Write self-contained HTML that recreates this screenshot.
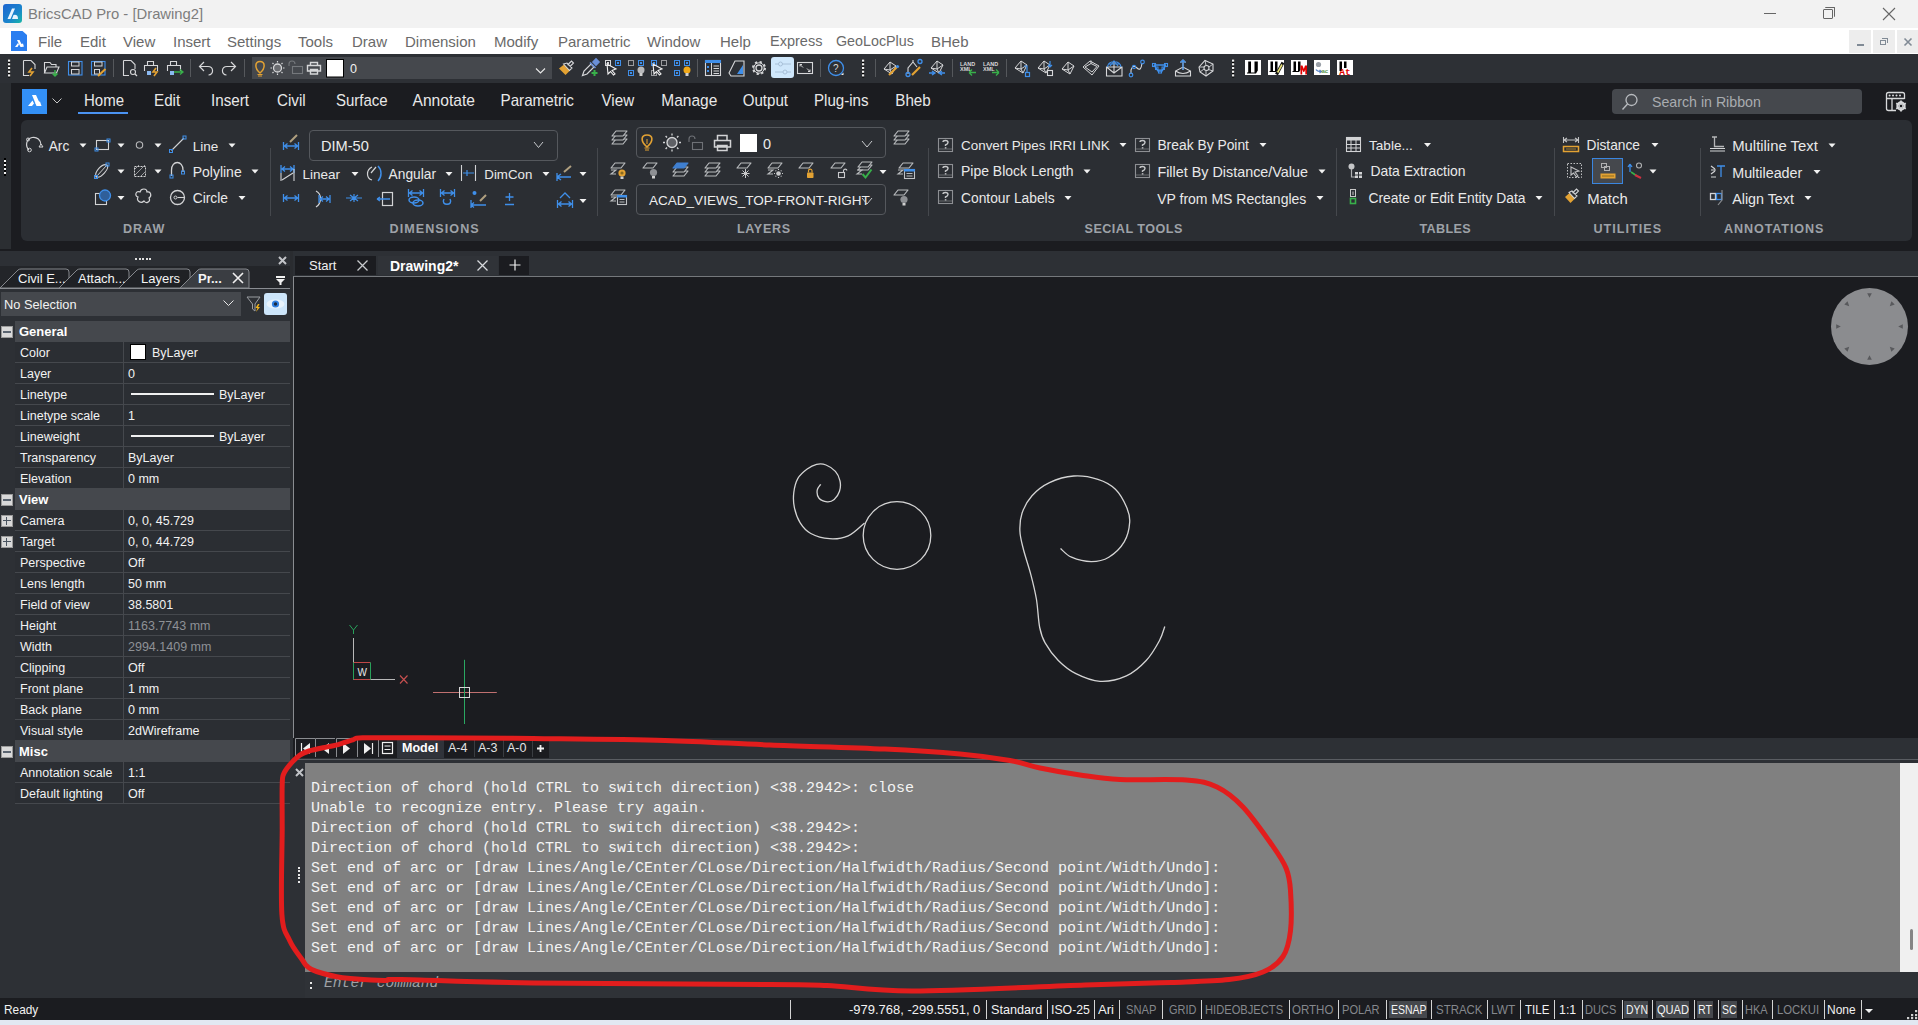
<!DOCTYPE html>
<html><head><meta charset="utf-8">
<style>
*{margin:0;padding:0;box-sizing:border-box}
html,body{width:1918px;height:1025px;overflow:hidden;background:#1b1c20;font-family:"Liberation Sans",sans-serif}
.a{position:absolute}
.t{position:absolute;white-space:nowrap;line-height:1}
svg{position:absolute;overflow:visible}
.mi{font-size:15px;color:#6a6a6a;top:34px}
.rt{font-size:15px;color:#e6e6e6;top:93px}
.rl{position:absolute;white-space:nowrap;line-height:1;font-size:14.5px;color:#e4e4e4}
.pt{font-size:12.5px;font-weight:bold;color:#9da1a7;letter-spacing:1.6px;top:221px}
.pk{position:absolute;white-space:nowrap;line-height:1;font-size:12.5px;color:#f2f2f2}
.cl{position:absolute;left:311px;font-family:"Liberation Mono",monospace;font-size:14.67px;color:#f4f4f4;white-space:pre;line-height:20px}
.sb{position:absolute;white-space:nowrap;line-height:1;top:1003px;font-size:13px;color:#f0f0f0}
.sg{color:#8c8f94}
.ss{position:absolute;top:1000px;width:1px;height:17px;background:#c8c8c8}
.hl{position:absolute;top:999px;height:19px;background:#45484d}

</style></head><body>
<!-- TITLE BAR -->
<div class="a" style="left:0;top:0;width:1918px;height:28px;background:#f2f2f2"></div>
<div class="a" style="left:3px;top:4px;width:19px;height:19px;border-radius:3px;background:linear-gradient(135deg,#1c64d0,#1a85cc 60%,#19b8a6)"></div>
<svg style="left:3px;top:4px" width="19" height="19"><path d="M9 4.5L12 4.5L7.5 15L4.5 15Z M10.5 11Q15 10 15 15L9 15Z" fill="#e8f4ff"/></svg>
<div class="t" style="left:28px;top:7.3px;font-size:14.8px;color:#7d7d7d">BricsCAD Pro - [Drawing2]</div>
<div class="a" style="left:1764px;top:13px;width:12px;height:1px;background:#666"></div>
<div class="a" style="left:1823px;top:9px;width:10px;height:10px;border:1px solid #666;border-radius:1px"></div>
<div class="a" style="left:1825px;top:7px;width:10px;height:10px;border-top:1px solid #666;border-right:1px solid #666;border-radius:1px"></div>
<svg style="left:1882px;top:7px" width="14" height="14"><path d="M1 1L13 13M13 1L1 13" stroke="#666" stroke-width="1.1"/></svg>
<!-- MENU BAR -->
<div class="a" style="left:0;top:28px;width:1918px;height:26px;background:#fff"></div>
<div class="a" style="left:11px;top:31px;width:16px;height:20px;background:#2a7ef0;clip-path:polygon(0 0,72% 0,100% 20%,100% 100%,0 100%)"></div>
<svg style="left:11px;top:31px" width="16" height="20"><path d="M6 9L8.5 9L12 16L9.5 16Z M4 16L7 12L8 13.5L6.5 16Z M9 13.5L12 12.5L13 16Z" fill="#fff"/></svg>
<div class="t mi" style="left:38px">File</div>
<div class="t mi" style="left:80px">Edit</div>
<div class="t mi" style="left:123px">View</div>
<div class="t mi" style="left:173px">Insert</div>
<div class="t mi" style="left:227px">Settings</div>
<div class="t mi" style="left:298px">Tools</div>
<div class="t mi" style="left:352px">Draw</div>
<div class="t mi" style="left:405px">Dimension</div>
<div class="t mi" style="left:494px">Modify</div>
<div class="t mi" style="left:558px">Parametric</div>
<div class="t mi" style="left:647px">Window</div>
<div class="t mi" style="left:720px">Help</div>
<div class="t mi" style="left:770px;font-size:14.5px">Express</div>
<div class="t mi" style="left:836px;font-size:14.3px">GeoLocPlus</div>
<div class="t mi" style="left:931px">BHeb</div>
<div class="a" style="left:1849px;top:30px;width:22px;height:23px;background:#ededed"></div>
<div class="a" style="left:1873px;top:30px;width:22px;height:23px;background:#ededed"></div>
<div class="a" style="left:1897px;top:30px;width:21px;height:23px;background:#ededed"></div>
<div class="a" style="left:1857px;top:44px;width:7px;height:2px;background:#808a95"></div>
<div class="a" style="left:1880px;top:40px;width:6px;height:5px;border:1px solid #808a95"></div>
<div class="a" style="left:1882px;top:38px;width:6px;height:5px;border-top:1px solid #808a95;border-right:1px solid #808a95"></div>
<svg style="left:1904px;top:38px" width="8" height="8"><path d="M0.5 0.5L7.5 7.5M7.5 0.5L0.5 7.5" stroke="#808a95" stroke-width="1.6"/></svg>
<!-- QAT -->
<div class="a" style="left:0;top:54px;width:1918px;height:29px;background:#2d3035"></div>
<div class="a" style="left:252px;top:57px;width:300px;height:22px;background:#45484d"></div>
<div class="a" style="left:771px;top:57px;width:23px;height:21px;border-radius:3px;background:#cfe7fb"></div>
<svg style="left:0;top:0" width="1918" height="90">
<rect x="8" y="59" width="2.2" height="18.5" fill="#000"/>
<rect x="8" y="59.5" width="2.2" height="2.2" fill="#f0f0f0"/>
<rect x="8" y="63.2" width="2.2" height="2.2" fill="#f0f0f0"/>
<rect x="8" y="66.9" width="2.2" height="2.2" fill="#f0f0f0"/>
<rect x="8" y="70.6" width="2.2" height="2.2" fill="#f0f0f0"/>
<rect x="8" y="74.3" width="2.2" height="2.2" fill="#f0f0f0"/>
<rect x="862" y="59" width="2.2" height="18.5" fill="#000"/>
<rect x="862" y="59.5" width="2.2" height="2.2" fill="#f0f0f0"/>
<rect x="862" y="63.2" width="2.2" height="2.2" fill="#f0f0f0"/>
<rect x="862" y="66.9" width="2.2" height="2.2" fill="#f0f0f0"/>
<rect x="862" y="70.6" width="2.2" height="2.2" fill="#f0f0f0"/>
<rect x="862" y="74.3" width="2.2" height="2.2" fill="#f0f0f0"/>
<rect x="1232" y="59" width="2.2" height="18.5" fill="#000"/>
<rect x="1232" y="59.5" width="2.2" height="2.2" fill="#f0f0f0"/>
<rect x="1232" y="63.2" width="2.2" height="2.2" fill="#f0f0f0"/>
<rect x="1232" y="66.9" width="2.2" height="2.2" fill="#f0f0f0"/>
<rect x="1232" y="70.6" width="2.2" height="2.2" fill="#f0f0f0"/>
<rect x="1232" y="74.3" width="2.2" height="2.2" fill="#f0f0f0"/>
<path d="M113.5 59V77" stroke="#55585c" stroke-width="1"/>
<path d="M190.5 59V77" stroke="#55585c" stroke-width="1"/>
<path d="M244.5 59V77" stroke="#55585c" stroke-width="1"/>
<path d="M697.5 59V77" stroke="#55585c" stroke-width="1"/>
<path d="M820.5 59V77" stroke="#55585c" stroke-width="1"/>
<path d="M875.5 59V77" stroke="#55585c" stroke-width="1"/>
<path d="M952.5 59V77" stroke="#55585c" stroke-width="1"/>
<path d="M1006.5 59V77" stroke="#55585c" stroke-width="1"/>
<path d="M23.5 60.5H31L35 64.5V69M29 75.5H23.5V60.5" fill="none" stroke="#d6d7d9" stroke-width="1.1"/>
<path d="M32 68L29 72H33L30 76" fill="none" stroke="#e3a233" stroke-width="1.6"/>
<path d="M44.5 73V62.5H50L51.5 64.5H56V67M44.5 73L47 67H59L56.5 73Z" fill="none" stroke="#d6d7d9" stroke-width="1.1"/><path d="M55 70V76M52.5 73.5L55 76L57.5 73.5" fill="none" stroke="#38b04a" stroke-width="1.5"/>
<rect x="68.5" y="61.5" width="13.5" height="13.5" fill="none" stroke="#3f8fea" stroke-width="1.1"/><rect x="71.5" y="62" width="7.5" height="4" fill="none" stroke="#d6d7d9"/><rect x="71.5" y="69.5" width="7.5" height="4.5" fill="none" stroke="#d6d7d9"/>
<rect x="91.5" y="61.5" width="13.5" height="13.5" fill="none" stroke="#3f8fea" stroke-width="1.1"/><rect x="94.5" y="62" width="7.5" height="4" fill="none" stroke="#d6d7d9"/><rect x="94.5" y="69.5" width="5" height="4.5" fill="none" stroke="#d6d7d9"/><path d="M98 76L105.5 69" stroke="#e3a233" stroke-width="2"/>
<path d="M123.5 60.5H131L135 64.5V69M129 75.5H123.5V60.5" fill="none" stroke="#d6d7d9" stroke-width="1.1"/>
<circle cx="133" cy="72" r="2.5" fill="none" stroke="#d6d7d9" stroke-width="1.1"/><path d="M135 74L137 76" stroke="#d6d7d9" stroke-width="1.2"/>
<path d="M147.5 65V61.5H153.5V65M144.5 71V65.5H157.5V71" fill="none" stroke="#d6d7d9" stroke-width="1.1"/><rect x="147" y="71" width="4" height="4" fill="#8ab8f0"/>
<path d="M156 68L153 72H157L154 76" fill="none" stroke="#e3a233" stroke-width="1.6"/>
<path d="M170.5 65V61.5H176.5V65M167.5 71V65.5H180.5V71" fill="none" stroke="#d6d7d9" stroke-width="1.1"/><rect x="170" y="71" width="4" height="4" fill="#8ab8f0"/>
<path d="M174 72H183M180 69.5L183 72L180 74.5" fill="none" stroke="#38b04a" stroke-width="1.3"/>
<path d="M204 62L199.5 66.5L204 71M200 66.5H208C214 66.5 214 75 208.5 75" fill="none" stroke="#d6d7d9" stroke-width="1.2"/>
<path d="M231 62L235.5 66.5L231 71M235 66.5H227C221 66.5 221 75 226.5 75" fill="none" stroke="#d6d7d9" stroke-width="1.2"/>
<path d="M260 73C254 68 255 61.5 260 61.5C265 61.5 266 68 260 73Z" fill="none" stroke="#e3a233" stroke-width="1.5"/><path d="M257.5 74.5H262.5M258 76H262" stroke="#e3a233" stroke-width="1"/>
<circle cx="277.5" cy="68" r="4" fill="#6a6c70" stroke="#d6d7d9" stroke-width="1.3"/><path d="M277.5 61V62.5M277.5 73.5V75M270.5 68H272M283 68H284.5M272.5 63L273.5 64M281.5 72L282.5 73M272.5 73L273.5 72M281.5 64L282.5 63" stroke="#d6d7d9" stroke-width="1.2"/>
<rect x="292.5" y="66.5" width="10" height="7" fill="none" stroke="#75787c" stroke-width="1.1"/><path d="M289 66V64A3 3 0 0 1 295 64" fill="none" stroke="#75787c" stroke-width="1.1"/>
<path d="M310.5 65V62.5H317.5V65M307.5 65.5H320.5V71H307.5ZM310.5 69.5H317.5V74H310.5Z" fill="none" stroke="#d6d7d9" stroke-width="1.4"/>
<rect x="326.5" y="59.5" width="17" height="17.5" fill="#fff" stroke="#000" stroke-width="1"/>
<path d="M536 68.5L540.5 73L545 68.5" fill="none" stroke="#e8e8e8" stroke-width="1.1"/>
<path d="M559 68.5L564 64.5L570 70.5L565.5 75Z" fill="#e3a233"/><path d="M563.5 64L569.5 70.5L572 68L567 63Z M567.5 65L571.5 61L573.5 63L570 66.5" fill="none" stroke="#d6d7d9" stroke-width="1.1"/>
<path d="M582.5 75.5L584 71L591 64L594 67L587 74Z" fill="none" stroke="#d6d7d9" stroke-width="1.2"/><path d="M590 62.5L595.5 68M593 62L596 59L599 62L596 65Z" fill="#6a8fd8" stroke="#6a8fd8" stroke-width="1.6"/><path d="M594.5 70V76M591.5 73H597.5" stroke="#38b04a" stroke-width="2"/>
<rect x="605.5" y="60.5" width="5" height="5" fill="none" stroke="#d6d7d9" stroke-width="1"/><rect x="607" y="62" width="2" height="2" fill="#d6d7d9"/>
<rect x="615.5" y="60.5" width="5" height="5" fill="none" stroke="#3f8fea" stroke-width="1"/><rect x="617" y="62" width="2" height="2" fill="#3f8fea"/>
<path d="M607 64L616 69L612 70.5L615 74L613.5 75L610.5 71.5L608 74Z" fill="#2d3035" stroke="#f0f0f0" stroke-width="1.1"/>
<rect x="628.5" y="60.5" width="5" height="5" fill="none" stroke="#9a9b9e"/>
<rect x="638.5" y="60.5" width="5" height="5" fill="none" stroke="#3f8fea" stroke-width="1"/><rect x="640" y="62" width="2" height="2" fill="#3f8fea"/>
<rect x="628.5" y="70.5" width="5" height="5" fill="none" stroke="#3f8fea" stroke-width="1"/><rect x="630" y="72" width="2" height="2" fill="#3f8fea"/>
<circle cx="641" cy="70" r="3.5" fill="#b8b9bb"/><rect x="639.5" y="73" width="3" height="3" fill="#d0d0d0"/>
<rect x="651.5" y="60.5" width="5" height="5" fill="none" stroke="#3f8fea" stroke-width="1"/><rect x="653" y="62" width="2" height="2" fill="#3f8fea"/>
<rect x="661.5" y="60.5" width="5" height="5" fill="none" stroke="#9a9b9e"/><rect x="651.5" y="70.5" width="5" height="5" fill="none" stroke="#9a9b9e"/>
<path d="M653 64L662 69L658 70.5L661 74L659.5 75L656.5 71.5L654 74Z" fill="#2d3035" stroke="#f0f0f0" stroke-width="1.1"/>
<rect x="674.5" y="60.5" width="5" height="5" fill="none" stroke="#3f8fea" stroke-width="1"/><rect x="676" y="62" width="2" height="2" fill="#3f8fea"/>
<rect x="684.5" y="60.5" width="5" height="5" fill="none" stroke="#3f8fea" stroke-width="1"/><rect x="686" y="62" width="2" height="2" fill="#3f8fea"/>
<rect x="674.5" y="70.5" width="5" height="5" fill="none" stroke="#3f8fea" stroke-width="1"/><rect x="676" y="72" width="2" height="2" fill="#3f8fea"/>
<circle cx="687" cy="70" r="3.5" fill="#f0a818"/><rect x="685.5" y="73" width="3" height="3" fill="#d0d0d0"/>
<rect x="705.5" y="60.5" width="15" height="15" fill="none" stroke="#d6d7d9" stroke-width="1.1"/><rect x="705" y="60" width="16" height="3" fill="#3f8fea"/><path d="M711.5 63V75.5" stroke="#d6d7d9"/><rect x="707" y="66" width="2" height="2" fill="#3f8fea"/><rect x="707" y="70" width="2" height="2" fill="#3f8fea"/><path d="M713.5 66H719M713.5 68.5H719M713.5 71H719M713.5 73.5H719" stroke="#d6d7d9"/>
<path d="M729 73L735 61H744V76H731Z" fill="none" stroke="#d6d7d9" stroke-width="1.1"/><path d="M737 74L743 65V74Z" fill="#3f8fea"/>
<circle cx="759" cy="68" r="3" fill="none" stroke="#d6d7d9" stroke-width="1.3"/><circle cx="759" cy="68" r="6" fill="none" stroke="#d6d7d9" stroke-width="2" stroke-dasharray="2.2 2.5"/><circle cx="759" cy="68" r="5.2" fill="none" stroke="#d6d7d9" stroke-width="1"/>
<path d="M775 64H791M775 72H791" stroke="#a8c0d8" stroke-width="1"/><circle cx="780.5" cy="64" r="2" fill="#cfe7fb" stroke="#a8c0d8"/><circle cx="785" cy="72" r="2" fill="#cfe7fb" stroke="#a8c0d8"/>
<rect x="797.5" y="62.5" width="15" height="11" fill="none" stroke="#d6d7d9" stroke-width="1.1"/><path d="M800 64.5L803 67.5M800 64.5H802M800 64.5V66.5M810 71.5L807 68.5M810 71.5H808M810 71.5V69.5" fill="none" stroke="#d6d7d9"/>
<circle cx="836" cy="68" r="7.5" fill="none" stroke="#3f8fea" stroke-width="1.3"/><text x="833" y="72" font-family="Liberation Sans" font-size="10" fill="#d6d7d9">?</text><path d="M841 75L843.5 72.5V75Z" fill="#f0f0f0"/>
<path d="M884 69L890 62L896 66L892 74Z M890 62L890 70L884 69M890 70L892 74M890 70L896 66" fill="none" stroke="#d6d7d9" stroke-width="1"/>
<path d="M889 75L897 67" stroke="#e3a233" stroke-width="2.2"/><circle cx="897.5" cy="66.5" r="1.6" fill="#3f8fea"/>
<path d="M908 74V68L913 62L917 67M913 62V60" fill="none" stroke="#d6d7d9" stroke-width="1.1"/><circle cx="908" cy="74.5" r="2" fill="none" stroke="#3f8fea" stroke-width="1.3"/><circle cx="920" cy="61.5" r="2" fill="none" stroke="#3f8fea" stroke-width="1.3"/><path d="M912 75L920 67" stroke="#e3a233" stroke-width="2.2"/>
<path d="M931 68L937 61L943 65L939 73Z M937 61L937 69L931 68M937 69L939 73M937 69L943 65" fill="none" stroke="#d6d7d9" stroke-width="1"/>
<path d="M929 73H935M932 71L935 73L932 75M945 73H939M942 71L939 73L942 75" fill="none" stroke="#3f8fea" stroke-width="1.3"/>
<text x="960" y="65.5" font-family="Liberation Sans" font-size="5.5" font-weight="bold" fill="#d8d8d8">LAND</text><text x="960" y="71" font-family="Liberation Sans" font-size="5.5" font-weight="bold" fill="#d8d8d8">XML</text>
<path d="M969 72.5H976M969 72.5L972 69.5M969 72.5L972 75.5" fill="none" stroke="#38b04a" stroke-width="1.3"/>
<text x="983" y="65.5" font-family="Liberation Sans" font-size="5.5" font-weight="bold" fill="#d8d8d8">LAND</text><text x="983" y="71" font-family="Liberation Sans" font-size="5.5" font-weight="bold" fill="#d8d8d8">XML</text>
<path d="M992 72.5H999M999 72.5L996 69.5M999 72.5L996 75.5" fill="none" stroke="#38b04a" stroke-width="1.3"/>
<path d="M1015 68L1021 61L1027 65L1023 73Z M1021 61L1021 69L1015 68M1021 69L1023 73M1021 69L1027 65" fill="none" stroke="#d6d7d9" stroke-width="1"/>
<path d="M1024 66H1027V72" fill="none" stroke="#3f8fea" stroke-width="1.2"/><rect x="1025.5" y="72.5" width="4" height="4" fill="none" stroke="#3f8fea" stroke-width="1.2"/>
<path d="M1038 68L1044 61L1050 65L1046 73Z M1044 61L1044 69L1038 68M1044 69L1046 73M1044 69L1050 65" fill="none" stroke="#d6d7d9" stroke-width="1"/>
<path d="M1050 61V67M1048 65L1050 67L1052 65" fill="none" stroke="#3f8fea" stroke-width="1.2"/><rect x="1047.5" y="70.5" width="5" height="5" fill="none" stroke="#d6d7d9" stroke-width="1.1"/>
<path d="M1062 69L1068 62L1074 66L1070 74Z M1068 62L1068 70L1062 69M1068 70L1070 74M1068 70L1074 66" fill="none" stroke="#d6d7d9" stroke-width="1"/>
<path d="M1083 67L1090 61L1099 66L1092 75Z M1085 67L1091 63.5L1097 66.5L1092 72Z M1091 63.5V60.5" fill="none" stroke="#d6d7d9" stroke-width="1"/>
<path d="M1106.5 76V67H1122V76ZM1106.5 67L1114 73L1122 67M1114 73V61" fill="none" stroke="#d6d7d9" stroke-width="1.1"/><path d="M1107.5 67C1108 60 1120 60 1121 67M1110 66L1114 61L1118 66M1108 64H1120" fill="none" stroke="#3f8fea" stroke-width="1.2"/>
<path d="M1131 74V70Q1133 64 1137 68Q1141 72 1142 63" fill="none" stroke="#d6d7d9" stroke-width="1.1"/><circle cx="1131" cy="75" r="1.8" fill="none" stroke="#3f8fea" stroke-width="1.2"/><circle cx="1142.5" cy="62" r="1.8" fill="none" stroke="#3f8fea" stroke-width="1.2"/><circle cx="1134" cy="67" r="1.6" fill="none" stroke="#3f8fea" stroke-width="1.1"/>
<path d="M1154 65L1158 71H1162L1166 65M1154 65H1166" fill="none" stroke="#3f8fea" stroke-width="1.4"/><rect x="1152.5" y="63.5" width="3" height="3" fill="none" stroke="#3f8fea" stroke-width="1.1"/><rect x="1164.5" y="63.5" width="3" height="3" fill="none" stroke="#3f8fea" stroke-width="1.1"/><rect x="1158.5" y="70" width="3" height="3" fill="none" stroke="#3f8fea" stroke-width="1.1"/><rect x="1155.5" y="67" width="2.5" height="2.5" fill="none" stroke="#3f8fea"/><rect x="1162" y="67" width="2.5" height="2.5" fill="none" stroke="#3f8fea"/>
<path d="M1175.5 76V71L1183 67L1190.5 71V76Z M1175.5 71Q1183 76 1190.5 71 M1183 70V60M1180.5 62.5L1183 60L1185.5 62.5" fill="none" stroke="#d6d7d9" stroke-width="1.1"/><path d="M1183 70V60M1180.5 62.5L1183 60L1185.5 62.5" fill="none" stroke="#3f8fea" stroke-width="1.2"/>
<path d="M1199 67L1205 60.5L1213 64L1213 71L1206 76L1200 72Z" fill="none" stroke="#d6d7d9" stroke-width="1.1"/><circle cx="1206.5" cy="68" r="2.5" fill="none" stroke="#d6d7d9" stroke-width="1.1"/><path d="M1205 60.5L1206 65.5M1213 64L1209 67M1213 71L1208.5 69.5M1206 76L1206 70.5M1200 72L1204 69M1199 67L1204 67" stroke="#d6d7d9" stroke-width="0.9"/>
<rect x="1245" y="60" width="16" height="15" fill="#fff"/>
<rect x="1268" y="60" width="16" height="15" fill="#fff"/>
<rect x="1291" y="60" width="16" height="15" fill="#fff"/>
<rect x="1314" y="60" width="16" height="15" fill="#fff"/>
<rect x="1337" y="60" width="16" height="15" fill="#fff"/>
<path d="M1248.2 61.5H1251V72.5H1248.2Z M1254.5 61.5H1257.8V70.5L1256 73.5H1247L1247 72.5H1254.5Z" fill="#000"/>
<path d="M1270.5 61.5H1273V71H1270.5Z M1275 61.5H1277.5V70L1276 72H1269.5V71H1275Z" fill="#000"/>
<path d="M1276.5 74.5L1283 62.5" stroke="#111" stroke-width="3.2"/><path d="M1277.6 72.5L1282 64.5" stroke="#e8e27a" stroke-width="1.6"/>
<path d="M1293.5 61.5H1296V71H1293.5Z M1298 61.5H1300.5V70L1299 72H1292.5V71H1298Z" fill="#000"/>
<path d="M1300.5 74.5V65.5H1302.5L1303.8 69L1305 65.5H1307V74.5H1305.3V69.5L1304.2 72H1303.4L1302.2 69.5V74.5Z" fill="#e00000"/>
<circle cx="1318.5" cy="64.5" r="2.6" fill="#9aa0a8"/><path d="M1316 69.5Q1317 71.5 1321 71.5M1319.5 70L1321.5 71.5L1319.5 73" fill="none" stroke="#5a86c8" stroke-width="1.2"/><text x="1321.5" y="73" font-family="Liberation Sans" font-size="6" font-weight="bold" fill="#5a9a50">ac</text>
<path d="M1339.5 61.5H1342V71H1339.5Z M1344 61.5H1346.5V68H1344Z" fill="#000"/>
<text x="1339.2" y="74.5" font-family="Liberation Mono" font-size="9.5" font-weight="bold" fill="#e00000">At</text>
</svg>
<div class="t" style="left:350px;top:63.1px;font-size:12.5px;color:#f0f0f0">0</div>
<!-- RIBBON -->
<div class="a" style="left:0;top:83px;width:1918px;height:168px;background:#1b1c20"></div>
<div class="a" style="left:0;top:83px;width:11px;height:166px;background:#2b2e32"></div>
<div class="a" style="left:4px;top:158px;width:2.3px;height:18px;background:#000"></div>
<div class="a" style="left:4px;top:159.6px;width:2.3px;height:2.4px;background:#f4f4f4"></div>
<div class="a" style="left:4px;top:163.6px;width:2.3px;height:2.4px;background:#f4f4f4"></div>
<div class="a" style="left:4px;top:167.6px;width:2.3px;height:2.4px;background:#f4f4f4"></div>
<div class="a" style="left:4px;top:171.6px;width:2.3px;height:2.4px;background:#f4f4f4"></div>
<div class="a" style="left:22px;top:89px;width:25px;height:25px;background:#3390f6"></div>
<svg style="left:22px;top:89px" width="25" height="25"><path d="M10 6L14 6L19 17L14.5 17Z M6 17L10.5 11.5L12 14.5L10 17Z M13 14L18 12.5L19.5 17L15 17Z" fill="#fff"/></svg>
<svg style="left:52px;top:98px" width="10" height="6"><path d="M0.5 0.5L5 5L9.5 0.5" stroke="#c8c8c8" fill="none"/></svg>
<div class="t" style="left:84px;top:93.0px;font-size:15.0px;color:#e8e8e8;transform:scaleY(1.1);transform-origin:0 12.70px">Home</div>
<div class="t" style="left:154px;top:93.0px;font-size:15.2px;color:#e8e8e8;transform:scaleY(1.1);transform-origin:0 12.87px">Edit</div>
<div class="t" style="left:211px;top:93.0px;font-size:15.2px;color:#e8e8e8;transform:scaleY(1.1);transform-origin:0 12.87px">Insert</div>
<div class="t" style="left:277px;top:93.0px;font-size:15.2px;color:#e8e8e8;transform:scaleY(1.1);transform-origin:0 12.87px">Civil</div>
<div class="t" style="left:336px;top:93.0px;font-size:15.0px;color:#e8e8e8;transform:scaleY(1.1);transform-origin:0 12.70px">Surface</div>
<div class="t" style="left:412.5px;top:92.9px;font-size:15.6px;color:#e8e8e8;transform:scaleY(1.1);transform-origin:0 13.21px">Annotate</div>
<div class="t" style="left:500.5px;top:93.0px;font-size:15.2px;color:#e8e8e8;transform:scaleY(1.1);transform-origin:0 12.87px">Parametric</div>
<div class="t" style="left:601.5px;top:93.0px;font-size:15.2px;color:#e8e8e8;transform:scaleY(1.1);transform-origin:0 12.87px">View</div>
<div class="t" style="left:661.3px;top:92.9px;font-size:15.5px;color:#e8e8e8;transform:scaleY(1.1);transform-origin:0 13.12px">Manage</div>
<div class="t" style="left:742.7px;top:93.0px;font-size:15.1px;color:#e8e8e8;transform:scaleY(1.1);transform-origin:0 12.78px">Output</div>
<div class="t" style="left:814px;top:93.0px;font-size:15.1px;color:#e8e8e8;transform:scaleY(1.1);transform-origin:0 12.78px">Plug-ins</div>
<div class="t" style="left:895.3px;top:93.0px;font-size:15.2px;color:#e8e8e8;transform:scaleY(1.1);transform-origin:0 12.87px">Bheb</div>
<div class="a" style="left:78px;top:112px;width:50px;height:2px;background:#4b93f2"></div>
<div class="a" style="left:1612px;top:89px;width:250px;height:25px;border-radius:4px;background:#45484d"></div>
<svg style="left:1621px;top:93px" width="18" height="18"><circle cx="10.5" cy="7" r="5.5" stroke="#b8bbbf" stroke-width="1.3" fill="none"/><path d="M6.5 11L1.5 16.5" stroke="#b8bbbf" stroke-width="1.4"/></svg>
<div class="t" style="left:1652px;top:95px;font-size:14.2px;color:#a9acb0">Search in Ribbon</div>
<svg style="left:1880px;top:88px" width="30" height="28"><path d="M16 22.5H8.5Q6.5 22.5 6.5 20.5V6.5Q6.5 4.5 8.5 4.5H22.5Q24.5 4.5 24.5 6.5V11M6.5 10.5H24.5M12 10.5V22.5" fill="none" stroke="#d8d9db" stroke-width="1.3"/><circle cx="9.6" cy="7.6" r="1" fill="#d8d9db"/><circle cx="13" cy="7.6" r="1" fill="#d8d9db"/><circle cx="16.5" cy="7.6" r="1" fill="#d8d9db"/><circle cx="20" cy="7.6" r="1" fill="#d8d9db"/><circle cx="21" cy="18" r="3.6" fill="none" stroke="#d8d9db" stroke-width="2.2"/><path d="M21 12.5V23.5M16.2 15.3L25.8 20.7M16.2 20.7L25.8 15.3" stroke="#d8d9db" stroke-width="1.8"/><circle cx="21" cy="18" r="1.3" fill="#1b1c20"/></svg>
<div class="a" style="left:21px;top:120px;width:1891px;height:121px;border-radius:6px;background:#2b2e33"></div>
<div class="t" style="left:123.0px;top:223px;font-size:12.6px;font-weight:bold;color:#9ea2a8;letter-spacing:1.0px">DRAW</div>
<div class="t" style="left:389.5px;top:223px;font-size:12.6px;font-weight:bold;color:#9ea2a8;letter-spacing:1.05px">DIMENSIONS</div>
<div class="t" style="left:737.0px;top:223px;font-size:12.6px;font-weight:bold;color:#9ea2a8;letter-spacing:0.62px">LAYERS</div>
<div class="t" style="left:1084.5px;top:223px;font-size:12.6px;font-weight:bold;color:#9ea2a8;letter-spacing:0.48px">SECIAL TOOLS</div>
<div class="t" style="left:1419.5px;top:223px;font-size:12.6px;font-weight:bold;color:#9ea2a8;letter-spacing:0.32px">TABLES</div>
<div class="t" style="left:1593.5px;top:223px;font-size:12.6px;font-weight:bold;color:#9ea2a8;letter-spacing:1.02px">UTILITIES</div>
<div class="t" style="left:1724.0px;top:223px;font-size:12.6px;font-weight:bold;color:#9ea2a8;letter-spacing:0.89px">ANNOTATIONS</div>
<div class="a" style="left:270.0px;top:148px;width:1px;height:68px;background:#45484d"></div>
<div class="a" style="left:597.0px;top:148px;width:1px;height:68px;background:#45484d"></div>
<div class="a" style="left:928.0px;top:148px;width:1px;height:68px;background:#45484d"></div>
<div class="a" style="left:1336.0px;top:148px;width:1px;height:68px;background:#45484d"></div>
<div class="a" style="left:1554.0px;top:148px;width:1px;height:68px;background:#45484d"></div>
<div class="a" style="left:1700.0px;top:148px;width:1px;height:68px;background:#45484d"></div>
<div class="t" style="left:48.7px;top:139.5px;font-size:13.73px;color:#e9e9e9">Arc</div>
<div class="t" style="left:192.7px;top:139.5px;font-size:13.5px;color:#e9e9e9">Line</div>
<div class="t" style="left:192.7px;top:165.1px;font-size:13.99px;color:#e9e9e9">Polyline</div>
<div class="t" style="left:192.7px;top:191.6px;font-size:13.8px;color:#e9e9e9">Circle</div>
<div class="t" style="left:302.5px;top:167.5px;font-size:13.5px;color:#e9e9e9">Linear</div>
<div class="t" style="left:388.6px;top:167.5px;font-size:13.75px;color:#e9e9e9">Angular</div>
<div class="t" style="left:484.3px;top:167.6px;font-size:13.3px;color:#e9e9e9">DimCon</div>
<div class="t" style="left:961px;top:138.8px;font-size:13.45px;color:#e9e9e9">Convert Pipes IRRI LINK</div>
<div class="t" style="left:961px;top:164.9px;font-size:13.97px;color:#e9e9e9">Pipe Block Length</div>
<div class="t" style="left:961px;top:191.6px;font-size:13.8px;color:#e9e9e9">Contour Labels</div>
<div class="t" style="left:1157.4px;top:138.8px;font-size:13.85px;color:#e9e9e9">Break By Point</div>
<div class="t" style="left:1157.4px;top:164.8px;font-size:14.36px;color:#e9e9e9">Fillet By Distance/Value</div>
<div class="t" style="left:1157.2px;top:191.6px;font-size:14.0px;color:#e9e9e9">VP from MS Rectangles</div>
<div class="t" style="left:1369px;top:138.8px;font-size:13.6px;color:#e9e9e9">Table...</div>
<div class="t" style="left:1370.4px;top:164.9px;font-size:13.93px;color:#e9e9e9">Data Extraction</div>
<div class="t" style="left:1368.5px;top:191.6px;font-size:13.85px;color:#e9e9e9">Create or Edit Entity Data</div>
<div class="t" style="left:1586.5px;top:138.8px;font-size:13.75px;color:#e9e9e9">Distance</div>
<div class="t" style="left:1587.2px;top:191.5px;font-size:14.9px;color:#e9e9e9">Match</div>
<div class="t" style="left:1732.2px;top:139.1px;font-size:14.86px;color:#e9e9e9">Multiline Text</div>
<div class="t" style="left:1732.2px;top:165.6px;font-size:14.35px;color:#e9e9e9">Multileader</div>
<div class="t" style="left:1732.2px;top:191.9px;font-size:14.3px;color:#e9e9e9">Align Text</div>
<div class="a" style="left:309px;top:130px;width:249px;height:31px;border:1px solid #55585d;border-radius:4px"></div>
<div class="t" style="left:321px;top:138.7px;font-size:14.6px;color:#ececec">DIM-50</div>
<div class="a" style="left:636px;top:127px;width:250px;height:31px;border:1px solid #55585d;border-radius:4px"></div>
<div class="a" style="left:636px;top:184px;width:250px;height:31px;border:1px solid #55585d;border-radius:4px"></div>
<div class="t" style="left:649px;top:194.4px;font-size:13.54px;color:#ececec">ACAD_VIEWS_TOP-FRONT-RIGHT</div>
<div class="a" style="left:740px;top:134px;width:17px;height:18px;background:#fff"></div>
<div class="t" style="left:763px;top:137.1px;font-size:14.5px;color:#ececec">0</div>
<div class="a" style="left:1592px;top:158px;width:31px;height:26px;background:#45484d;border:1px solid #3a86e0"></div>
<svg style="left:0;top:0" width="1918" height="260">
<path d="M79.5 143.5H86.5L83.0 147.5Z" fill="#f2f2f2"/>
<path d="M117.5 143.5H124.5L121.0 147.5Z" fill="#f2f2f2"/>
<path d="M154.5 143.5H161.5L158.0 147.5Z" fill="#f2f2f2"/>
<path d="M228.5 143.5H235.5L232.0 147.5Z" fill="#f2f2f2"/>
<path d="M117.5 169.5H124.5L121.0 173.5Z" fill="#f2f2f2"/>
<path d="M154.5 169.5H161.5L158.0 173.5Z" fill="#f2f2f2"/>
<path d="M251.5 169.5H258.5L255.0 173.5Z" fill="#f2f2f2"/>
<path d="M117.5 196H124.5L121.0 200Z" fill="#f2f2f2"/>
<path d="M238.5 196H245.5L242.0 200Z" fill="#f2f2f2"/>
<path d="M351.5 172H358.5L355.0 176Z" fill="#f2f2f2"/>
<path d="M445.5 172H452.5L449.0 176Z" fill="#f2f2f2"/>
<path d="M542.5 172H549.5L546.0 176Z" fill="#f2f2f2"/>
<path d="M579.5 172H586.5L583.0 176Z" fill="#f2f2f2"/>
<path d="M579.5 199H586.5L583.0 203Z" fill="#f2f2f2"/>
<path d="M879.5 170H886.5L883.0 174Z" fill="#f2f2f2"/>
<path d="M1119.5 143H1126.5L1123.0 147Z" fill="#f2f2f2"/>
<path d="M1083.5 169.5H1090.5L1087.0 173.5Z" fill="#f2f2f2"/>
<path d="M1064.5 196H1071.5L1068.0 200Z" fill="#f2f2f2"/>
<path d="M1259.5 143H1266.5L1263.0 147Z" fill="#f2f2f2"/>
<path d="M1318.5 169.5H1325.5L1322.0 173.5Z" fill="#f2f2f2"/>
<path d="M1316.5 196H1323.5L1320.0 200Z" fill="#f2f2f2"/>
<path d="M1424 143H1431L1427.5 147Z" fill="#f2f2f2"/>
<path d="M1535.5 196H1542.5L1539.0 200Z" fill="#f2f2f2"/>
<path d="M1651.5 143H1658.5L1655.0 147Z" fill="#f2f2f2"/>
<path d="M1649.5 169.5H1656.5L1653.0 173.5Z" fill="#f2f2f2"/>
<path d="M1828.5 143.5H1835.5L1832.0 147.5Z" fill="#f2f2f2"/>
<path d="M1813.5 170H1820.5L1817.0 174Z" fill="#f2f2f2"/>
<path d="M1804.5 196H1811.5L1808.0 200Z" fill="#f2f2f2"/>
<path d="M534 142L538.5 147.5L543 142" fill="none" stroke="#c8cacd" stroke-width="1"/>
<path d="M862 141L867.0 147L872 141" fill="none" stroke="#c8cacd" stroke-width="1"/>
<path d="M862 198L867.0 204L872 198" fill="none" stroke="#c8cacd" stroke-width="1"/>
<path d="M29 150C25 146 26 139 32 137.5C37 136.5 41 140 41 145" fill="none" stroke="#d2d3d5" stroke-width="1.2"/><circle cx="29.5" cy="150" r="1.8" fill="none" stroke="#d2d3d5"/><circle cx="28" cy="139.5" r="1.5" fill="none" stroke="#d2d3d5"/><path d="M39 147H43L41 144Z" fill="none" stroke="#d2d3d5"/>
<rect x="96.5" y="140.5" width="12" height="9" fill="none" stroke="#d2d3d5" stroke-width="1.1"/>
<rect x="107.0" y="139.0" width="3" height="3" fill="none" stroke="#3f8fea" stroke-width="1"/>
<rect x="95.0" y="148.0" width="3" height="3" fill="none" stroke="#3f8fea" stroke-width="1"/>
<circle cx="139.5" cy="145" r="3.2" fill="none" stroke="#b8b9bb" stroke-width="1.1"/>
<path d="M171.5 150.5L184 138" stroke="#d2d3d5" stroke-width="1.1"/>
<rect x="169.5" y="149.5" width="3" height="3" fill="none" stroke="#3f8fea" stroke-width="1"/>
<rect x="183.0" y="136.0" width="3" height="3" fill="none" stroke="#3f8fea" stroke-width="1"/>
<path d="M96 177C94 172 102 163 107 165C110 168 101 179 96 177Z" fill="none" stroke="#d2d3d5" stroke-width="1.1"/><path d="M96 177L107 165" stroke="#d2d3d5"/>
<rect x="94.5" y="175.5" width="3" height="3" fill="none" stroke="#3f8fea" stroke-width="1"/>
<rect x="106.0" y="163.0" width="3" height="3" fill="none" stroke="#3f8fea" stroke-width="1"/>
<rect x="134.5" y="166.5" width="11" height="10" fill="none" stroke="#d2d3d5" stroke-dasharray="2 1"/><path d="M134 170L139 165M134 176L145 165M140 177L146 171" stroke="#9a9b9e" stroke-width="1"/>
<path d="M171.5 176V170C171.5 160 183 160 183 170V172" fill="none" stroke="#d2d3d5" stroke-width="1.3"/>
<rect x="170.0" y="175.0" width="3" height="3" fill="none" stroke="#3f8fea" stroke-width="1"/>
<rect x="181.5" y="171.0" width="3" height="3" fill="none" stroke="#3f8fea" stroke-width="1"/>
<rect x="95.5" y="193.5" width="11" height="11" fill="none" stroke="#d2d3d5" stroke-width="1.1"/><circle cx="105" cy="195.5" r="5.5" fill="#2f5f9a" stroke="#3f8fea" stroke-width="1.3"/>
<path d="M138 197C134 196 136 190 140 192C141 188 147 188 147 192C151 191 152 196 149 198C151 202 146 204 144 201C141 204 136 201 138 197Z" fill="none" stroke="#d2d3d5" stroke-width="1.2"/>
<circle cx="177.5" cy="197.5" r="7" fill="none" stroke="#d2d3d5" stroke-width="1.3"/><path d="M177.5 197.5H185" stroke="#d2d3d5" stroke-width="1.1"/><circle cx="175.5" cy="197.5" r="1.5" fill="none" stroke="#d2d3d5"/>
<path d="M283.5 146H298.5M283.5 142V150M298.5 142V150M284.5 146L287.5 143.5M284.5 146L287.5 148.5M297.5 146L294.5 143.5M297.5 146L294.5 148.5" fill="none" stroke="#3f8fea" stroke-width="1.3"/>
<path d="M290 142L297 135" stroke="#b0a080" stroke-width="2"/>
<path d="M281 169H294M281 165V173M294 165V173M282 169L285 166.5M282 169L285 171.5M293 169L290 166.5M293 169L290 171.5" fill="none" stroke="#3f8fea" stroke-width="1.3"/>
<path d="M281 173V181M294 169V181M282 180L293 173" stroke="#d2d3d5" stroke-width="1.1"/>
<path d="M372 167C366 170 366 178 372 180M371 173L376 167" fill="none" stroke="#d2d3d5" stroke-width="1.2"/><path d="M378 166C382 170 382 177 378 181" fill="none" stroke="#3f8fea" stroke-width="1.5"/>
<path d="M461.5 165V181M475.5 165V181" stroke="#d2d3d5" stroke-width="1.1"/><path d="M463 173H474M467 170V176" stroke="#3f8fea" stroke-width="1.2"/>
<path d="M557 177H571M557 177L561 174M557 177L561 180M557 173V181" fill="none" stroke="#3f8fea" stroke-width="1.3"/><path d="M564 172L571 166" stroke="#b0a080" stroke-width="2"/>
<path d="M283.5 198H298.5M283.5 194V202M298.5 194V202M284.5 198L287.5 195.5M284.5 198L287.5 200.5M297.5 198L294.5 195.5M297.5 198L294.5 200.5" fill="none" stroke="#3f8fea" stroke-width="1.3"/>
<path d="M316 191C322 194 322 203 316 207" fill="none" stroke="#d2d3d5" stroke-width="1.2"/>
<path d="M319 199H330M319 195V203M330 195V203M320 199L323 196.5M320 199L323 201.5M329 199L326 196.5M329 199L326 201.5" fill="none" stroke="#3f8fea" stroke-width="1.3"/>
<path d="M346 198H362M354 194V202M350 195L358 201M358 195L350 201" stroke="#3f8fea" stroke-width="1.2"/>
<rect x="382.5" y="192.5" width="10" height="13" fill="none" stroke="#d2d3d5" stroke-width="1.2"/><path d="M377 199H390M377 199L380 197M377 199L380 201" stroke="#3f8fea" stroke-width="1.3"/>
<path d="M408.5 193H423.5M408.5 189V197M423.5 189V197M409.5 193L412.5 190.5M409.5 193L412.5 195.5M422.5 193L419.5 190.5M422.5 193L419.5 195.5" fill="none" stroke="#3f8fea" stroke-width="1.3"/>
<ellipse cx="414" cy="200" rx="5" ry="3" fill="none" stroke="#3f8fea" stroke-width="1.5"/><ellipse cx="418" cy="203" rx="5" ry="3" fill="none" stroke="#3f8fea" stroke-width="1.5"/>
<path d="M440.5 193H454.5M440.5 189V197M454.5 189V197M441.5 193L444.5 190.5M441.5 193L444.5 195.5M453.5 193L450.5 190.5M453.5 193L450.5 195.5" fill="none" stroke="#3f8fea" stroke-width="1.3"/>
<path d="M444 199C440 206 454 206 450 199" fill="none" stroke="#3f8fea" stroke-width="1.5"/>
<circle cx="474.5" cy="193" r="2" fill="#3f8fea"/><path d="M471 205H486M471 205L474 202.5M471 205L474 207.5M471 200V208" fill="none" stroke="#3f8fea" stroke-width="1.3"/><path d="M480 201L486 195" stroke="#b0a080" stroke-width="2"/>
<path d="M509.5 193V201M505.5 197H513.5M505 204.5H514" stroke="#3f8fea" stroke-width="1.3"/>
<path d="M557.5 204H572.5M557.5 200V208M572.5 200V208M558.5 204L561.5 201.5M558.5 204L561.5 206.5M571.5 204L568.5 201.5M571.5 204L568.5 206.5" fill="none" stroke="#3f8fea" stroke-width="1.3"/>
<path d="M560 198L565 193L570 198" fill="none" stroke="#3f8fea" stroke-width="1.3"/>
<path d="M612 144L616 139H627L623 144Z" fill="none" stroke="#b9bbbe" stroke-width="1.2" stroke-linejoin="round"/>
<path d="M612 140L616 135H627L623 140Z" fill="#2b2e33" stroke="#b9bbbe" stroke-width="1.2" stroke-linejoin="round"/>
<path d="M612 136L616 131H627L623 136Z" fill="#2b2e33" stroke="#b9bbbe" stroke-width="1.2" stroke-linejoin="round"/>
<path d="M894 144L898 139H909L905 144Z" fill="none" stroke="#b9bbbe" stroke-width="1.2" stroke-linejoin="round"/>
<path d="M894 140L898 135H909L905 140Z" fill="#2b2e33" stroke="#b9bbbe" stroke-width="1.2" stroke-linejoin="round"/>
<path d="M894 136L898 131H909L905 136Z" fill="#2b2e33" stroke="#b9bbbe" stroke-width="1.2" stroke-linejoin="round"/>
<path d="M611 168L615 163H625L621 168Z" fill="none" stroke="#b9bbbe" stroke-width="1.2" stroke-linejoin="round"/>
<path d="M611 170H616L611 174H616" fill="none" stroke="#b9bbbe" stroke-width="1.1"/>
<circle cx="622" cy="173" r="3.6" fill="#e3a233"/><circle cx="622" cy="173" r="1.6" fill="#8a6a20"/><rect x="620.5" y="176.5" width="3" height="2.5" fill="#d0d0d0"/>
<path d="M611 195L615 190H625L621 195Z" fill="none" stroke="#b9bbbe" stroke-width="1.2" stroke-linejoin="round"/>
<path d="M611 197H616L611 201H616" fill="none" stroke="#b9bbbe" stroke-width="1.1"/>
<rect x="617.5" y="195.5" width="9" height="9" fill="#2b2e33" stroke="#c0c2c5" stroke-width="1.1"/><rect x="617" y="195" width="10" height="2.5" fill="#3f8fea"/><path d="M619.5 199.5H624.5M619.5 202H624.5" stroke="#b9bbbe"/>
<path d="M643 168L647 163H657L653 168Z" fill="none" stroke="#b9bbbe" stroke-width="1.2" stroke-linejoin="round"/>
<circle cx="653.5" cy="172.5" r="3.6" fill="#8e9094"/><rect x="652" y="176" width="3" height="2.5" fill="#d0d0d0"/>
<path d="M673 176L677 171H688L684 176Z" fill="none" stroke="#b9bbbe" stroke-width="1.2" stroke-linejoin="round"/>
<path d="M673 172L677 167H688L684 172Z" fill="#2b2e33" stroke="#b9bbbe" stroke-width="1.2" stroke-linejoin="round"/>
<path d="M673 168L677 163H688L684 168Z" fill="#3f7fd0" stroke="#3f7fd0" stroke-width="1.2" stroke-linejoin="round"/>
<path d="M705 176L709 171H720L716 176Z" fill="none" stroke="#b9bbbe" stroke-width="1.2" stroke-linejoin="round"/>
<path d="M705 172L709 167H720L716 172Z" fill="#2b2e33" stroke="#b9bbbe" stroke-width="1.2" stroke-linejoin="round"/>
<path d="M705 168L709 163H720L716 168Z" fill="#2b2e33" stroke="#b9bbbe" stroke-width="1.2" stroke-linejoin="round"/>
<path d="M737 168L741 163H751L747 168Z" fill="none" stroke="#b9bbbe" stroke-width="1.2" stroke-linejoin="round"/>
<path d="M745.5 169V178M741.5 173.5H749.5M742.5 170.5L748.5 176.5M748.5 170.5L742.5 176.5" stroke="#c8c9cb" stroke-width="1"/>
<path d="M768 168L772 163H782L778 168Z" fill="none" stroke="#b9bbbe" stroke-width="1.2" stroke-linejoin="round"/>
<path d="M768 170H773L768 174H773" fill="none" stroke="#b9bbbe" stroke-width="1.1"/>
<circle cx="778.5" cy="173.5" r="2.3" fill="#c8c9cb"/><path d="M778.5 169V170M778.5 177V178M774 173.5H775M782 173.5H783M775.5 170.5L776.2 171.2M780.8 175.8L781.5 176.5M775.5 176.5L776.2 175.8M780.8 171.2L781.5 170.5" stroke="#c8c9cb" stroke-width="1.1"/>
<path d="M799 168L803 163H813L809 168Z" fill="none" stroke="#b9bbbe" stroke-width="1.2" stroke-linejoin="round"/>
<rect x="807" y="172.5" width="6.5" height="5.5" rx="0.8" fill="#e3a233"/><path d="M808.5 172.5V170.8A1.75 1.75 0 0 1 812 170.8V172.5" fill="none" stroke="#e3a233" stroke-width="1.2"/>
<path d="M831 168L835 163H845L841 168Z" fill="none" stroke="#b9bbbe" stroke-width="1.2" stroke-linejoin="round"/>
<rect x="838.5" y="172.5" width="6" height="5" fill="none" stroke="#c8c9cb" stroke-width="1.1"/><path d="M843.5 172.5V170.5A1.8 1.8 0 0 1 847 170.5" fill="none" stroke="#c8c9cb" stroke-width="1.1"/>
<path d="M858 170L862 165H872L868 170Z" fill="none" stroke="#b9bbbe" stroke-width="1.2" stroke-linejoin="round"/>
<path d="M858 167L862 162H872L868 167Z" fill="#2b2e33" stroke="#b9bbbe" stroke-width="1.2" stroke-linejoin="round"/>
<path d="M857 170H862L857 174H862" fill="none" stroke="#b9bbbe" stroke-width="1.1"/>
<path d="M862.5 174L865.5 177.5L871.5 169.5" fill="none" stroke="#38b04a" stroke-width="2"/>
<path d="M899 168L903 163H913L909 168Z" fill="none" stroke="#b9bbbe" stroke-width="1.2" stroke-linejoin="round"/>
<path d="M898 170H903L898 174H903" fill="none" stroke="#b9bbbe" stroke-width="1.1"/>
<rect x="904.5" y="169.5" width="10" height="9" fill="#2b2e33" stroke="#c0c2c5" stroke-width="1.1"/><rect x="904" y="169" width="11" height="2.5" fill="#3f8fea"/><path d="M906.5 173.5H912.5M906.5 176H912.5" stroke="#b9bbbe"/>
<path d="M894 195L898 190H908L904 195Z" fill="none" stroke="#b9bbbe" stroke-width="1.2" stroke-linejoin="round"/>
<circle cx="904" cy="199.5" r="3.6" fill="#8e9094"/><rect x="902.5" y="203" width="3" height="2.5" fill="#d0d0d0"/>
<path d="M647 147C640 141 641 135 647 135C653 135 654 141 647 147Z" fill="none" stroke="#e3a233" stroke-width="1.6"/><path d="M644.5 148H649.5M645 150H649" stroke="#e3a233" stroke-width="1.2"/><path d="M647 139V144" stroke="#e3a233"/>
<circle cx="672" cy="142.5" r="5" fill="#5f6166" stroke="#d2d3d5" stroke-width="1.4"/><path d="M672 133.5V135.5M672 149.5V151.5M663 142.5H665M679 142.5H681M665.6 136L667 137.5M677 147.5L678.4 149M665.6 149L667 147.5M677 137.5L678.4 136" stroke="#d2d3d5" stroke-width="1.3"/>
<rect x="692.5" y="142.5" width="10" height="7" fill="none" stroke="#6e7176" stroke-width="1.1"/><path d="M689 142V139A3 3 0 0 1 695 139" fill="none" stroke="#6e7176" stroke-width="1.1"/>
<path d="M717.5 140V135.5H727V140M714.5 140.5H730.5V147H714.5ZM717.5 145.5H727V150.5H717.5Z" fill="none" stroke="#d2d3d5" stroke-width="1.5"/>
<rect x="938.5" y="138.5" width="14" height="13" fill="none" stroke="#8d8f93" stroke-width="1.1"/><path d="M943 142Q943 140.5 945.5 140.5Q948 140.5 948 142.5Q948 144 945.5 145V146" fill="none" stroke="#c8c9cb" stroke-width="1.4"/><rect x="944.8" y="147.2" width="1.6" height="1.6" fill="#c8c9cb"/><path d="M939 149H952" stroke="#6a6c70"/>
<rect x="938.5" y="164.5" width="14" height="13" fill="none" stroke="#8d8f93" stroke-width="1.1"/><path d="M943 168Q943 166.5 945.5 166.5Q948 166.5 948 168.5Q948 170 945.5 171V172" fill="none" stroke="#c8c9cb" stroke-width="1.4"/><rect x="944.8" y="173.2" width="1.6" height="1.6" fill="#c8c9cb"/><path d="M939 175H952" stroke="#6a6c70"/>
<rect x="938.5" y="190.5" width="14" height="13" fill="none" stroke="#8d8f93" stroke-width="1.1"/><path d="M943 194Q943 192.5 945.5 192.5Q948 192.5 948 194.5Q948 196 945.5 197V198" fill="none" stroke="#c8c9cb" stroke-width="1.4"/><rect x="944.8" y="199.2" width="1.6" height="1.6" fill="#c8c9cb"/><path d="M939 201H952" stroke="#6a6c70"/>
<rect x="1135.5" y="138.5" width="14" height="13" fill="none" stroke="#8d8f93" stroke-width="1.1"/><path d="M1140 142Q1140 140.5 1142.5 140.5Q1145 140.5 1145 142.5Q1145 144 1142.5 145V146" fill="none" stroke="#c8c9cb" stroke-width="1.4"/><rect x="1141.8" y="147.2" width="1.6" height="1.6" fill="#c8c9cb"/><path d="M1136 149H1149" stroke="#6a6c70"/>
<rect x="1135.5" y="164.5" width="14" height="13" fill="none" stroke="#8d8f93" stroke-width="1.1"/><path d="M1140 168Q1140 166.5 1142.5 166.5Q1145 166.5 1145 168.5Q1145 170 1142.5 171V172" fill="none" stroke="#c8c9cb" stroke-width="1.4"/><rect x="1141.8" y="173.2" width="1.6" height="1.6" fill="#c8c9cb"/><path d="M1136 175H1149" stroke="#6a6c70"/>
<rect x="1346.5" y="137.5" width="14" height="14" fill="none" stroke="#d2d3d5" stroke-width="1.1"/><rect x="1346.5" y="137.5" width="14" height="3" fill="#d2d3d5"/><path d="M1346.5 144.5H1360.5M1346.5 148H1360.5M1351 140V151.5M1356 140V151.5" stroke="#d2d3d5"/>
<circle cx="1351.5" cy="166.5" r="3" fill="#c5c6c8"/><path d="M1351.5 169V177H1355" fill="none" stroke="#b0b1b3" stroke-width="1.2"/><rect x="1355" y="172" width="3" height="2.5" fill="#d2d3d5"/><rect x="1359" y="172" width="3" height="2.5" fill="#d2d3d5"/><rect x="1355" y="175.5" width="3" height="2.5" fill="#d2d3d5"/><rect x="1359" y="175.5" width="3" height="2.5" fill="#d2d3d5"/>
<rect x="1350.5" y="189.5" width="5" height="7" fill="none" stroke="#c8c8c8" stroke-width="1"/><path d="M1353 191.5V195" stroke="#c8c8c8"/><rect x="1350.5" y="198.5" width="5" height="5" fill="none" stroke="#38b04a" stroke-width="1.6"/>
<path d="M1563.5 137V143M1578.5 137V143M1564 140H1578M1564 140L1567 138M1564 140L1567 142M1578 140L1575 138M1578 140L1575 142" fill="none" stroke="#c0c1c3" stroke-width="1.1"/><rect x="1563.5" y="146.5" width="15" height="5" fill="none" stroke="#e3a233" stroke-width="1.5"/><path d="M1566 149H1576" stroke="#a07c30"/>
<rect x="1567.5" y="163.5" width="14" height="14" fill="none" stroke="#c0c1c3" stroke-dasharray="1.5 1.5"/><path d="M1571 167L1579 171L1575 172L1578 176L1576.5 177L1573.5 173L1571 175Z" fill="none" stroke="#c0c1c3" stroke-width="1.1"/>
<rect x="1601.5" y="163.5" width="5" height="4" fill="none" stroke="#b0b1b3"/><rect x="1604.5" y="166.5" width="5" height="4" fill="none" stroke="#b0b1b3"/><rect x="1600.5" y="173.5" width="15" height="5" fill="#e3a233"/><path d="M1602 176H1614" stroke="#8a6a20"/>
<path d="M1630 172V164M1630 164L1628 167M1630 164L1632 167" stroke="#3f8fea" stroke-width="1.3" fill="none"/><path d="M1631 172L1637 176" stroke="#38b04a" stroke-width="1.6"/><path d="M1635 175L1641 178" stroke="#d03040" stroke-width="2"/><circle cx="1639" cy="165.5" r="2.5" fill="none" stroke="#b0b1b3" stroke-width="1.1"/>
<path d="M1565 197L1569.5 193L1575 198.5L1570.5 203Z" fill="#e3a233"/><path d="M1569 192.5L1574.5 198.5L1577 196L1572 191Z M1572.5 193L1576.5 189L1578.5 191L1575 194.5" fill="none" stroke="#d2d3d5" stroke-width="1.1"/>
<path d="M1712 137H1717M1714.5 137V146.5H1724" stroke="#b5b6b8" stroke-width="1.3" fill="none"/><path d="M1710 148.5H1725M1710 151H1725" stroke="#d2d3d5" stroke-width="1.1"/>
<path d="M1717 166H1725M1721 166V177" stroke="#3f8fea" stroke-width="1.3"/><path d="M1711 166L1715 169M1711 170H1716M1711 174L1715 171M1711 177H1716" stroke="#d2d3d5" stroke-width="1.2"/>
<rect x="1710.5" y="193.5" width="5" height="6" fill="none" stroke="#d2d3d5" stroke-width="1.3"/><rect x="1716.5" y="193.5" width="5" height="6" fill="none" stroke="#3f8fea" stroke-width="1.3"/><path d="M1722 190V200L1718 205" fill="none" stroke="#8a8c90" stroke-width="1.2"/>
</svg>
<!-- PROPERTIES PANEL -->
<div class="a" style="left:0;top:251px;width:291px;height:747px;background:#2d3035"></div>
<div class="a" style="left:135.0px;top:258px;width:2px;height:2px;background:#e0e0e0"></div>
<div class="a" style="left:138.6px;top:258px;width:2px;height:2px;background:#e0e0e0"></div>
<div class="a" style="left:142.2px;top:258px;width:2px;height:2px;background:#e0e0e0"></div>
<div class="a" style="left:145.8px;top:258px;width:2px;height:2px;background:#e0e0e0"></div>
<div class="a" style="left:149.4px;top:258px;width:2px;height:2px;background:#e0e0e0"></div>
<svg style="left:278px;top:256px" width="9" height="9"><path d="M1 1L8 8M8 1L1 8" stroke="#c2c4c8" stroke-width="2"/></svg>
<div class="a" style="left:0;top:266px;width:291px;height:22px;background:#232529"></div>
<svg style="left:0;top:266px" width="291" height="23">
<path d="M0 22L18 4Q19 3 21 3L66 3Q69 3 69 6L69 22Z" fill="#1f2125" stroke="#85888d" stroke-width="1"/>
<path d="M59 22L77 4Q78 3 80 3L126 3Q129 3 129 6L129 22Z" fill="#1f2125" stroke="#85888d" stroke-width="1"/>
<path d="M119 22L137 4Q138 3 140 3L187 3Q190 3 190 6L190 22Z" fill="#1f2125" stroke="#85888d" stroke-width="1"/>
<path d="M180 22L198 4Q199 3 201 3L246 3Q249 3 249 6L249 22Z" fill="#3a3d42" stroke="#85888d" stroke-width="1"/>
<path d="M0 22.5L291 22.5" stroke="#8a8d92" stroke-width="1.2"/>
</svg>
<div class="pk" style="left:18px;top:272px;font-size:13px;font-weight:normal;color:#f4f4f4">Civil E...</div>
<div class="pk" style="left:78px;top:272px;font-size:13px;font-weight:normal;color:#f4f4f4">Attach...</div>
<div class="pk" style="left:141px;top:272px;font-size:13px;font-weight:normal;color:#f4f4f4">Layers</div>
<div class="pk" style="left:198px;top:272px;font-size:13px;font-weight:bold;color:#f4f4f4">Pr...</div>
<svg style="left:232px;top:272px" width="12" height="12"><path d="M1 1L11 11M11 1L1 11" stroke="#f0f0f0" stroke-width="1.6"/></svg>
<div class="a" style="left:276px;top:276px;width:9px;height:2px;background:#f0f0f0"></div>
<svg style="left:276px;top:279px" width="9" height="7"><path d="M0 0L9 0L5.5 3.5L5.5 6L3.5 6L3.5 3.5Z" fill="#f0f0f0"/></svg>
<div class="a" style="left:1px;top:292px;width:240px;height:24px;background:#45484d"></div>
<div class="pk" style="left:4px;top:299px;font-size:12.8px">No Selection</div>
<svg style="left:223px;top:300px" width="11" height="7"><path d="M0.5 0.5L5.5 5.5L10.5 0.5" stroke="#e8e8e8" stroke-width="1" fill="none"/></svg>
<svg style="left:246px;top:296px" width="16" height="17"><path d="M1 1L14 1L9 8L9 15L6.5 13L6.5 8Z" fill="none" stroke="#9a9da2" stroke-width="1"/><path d="M12 8L9.5 12L11.5 12L10 16L14 11L12 11L13.5 8Z" fill="#f2b418"/></svg>
<div class="a" style="left:264px;top:293px;width:23px;height:22px;border-radius:3px;background:#cde6fb"></div>
<svg style="left:264px;top:293px" width="23" height="22"><ellipse cx="11.5" cy="11" rx="9" ry="4.5" fill="#e8f3fc"/><circle cx="11.5" cy="11" r="3.6" fill="#2f7fe0"/><circle cx="11.5" cy="11" r="1.7" fill="#1a2a40"/></svg>
<div class="a" style="left:15px;top:321px;width:275px;height:21px;background:#45484d"></div>
<div class="a" style="left:1px;top:326px;width:12px;height:12px;background:#d9d9d9;border:1px solid #9a9a9a"></div>
<div class="a" style="left:3px;top:331px;width:8px;height:2px;background:#5a6470"></div>
<div class="pk" style="left:19px;top:325px;font-size:13px;font-weight:bold;color:#fff">General</div>
<div class="a" style="left:15px;top:342px;width:275px;height:21px;background:#2b2e33;border-bottom:1px solid #45484d"></div>
<div class="a" style="left:123px;top:342px;width:1px;height:21px;background:#45484d"></div>
<div class="pk" style="left:20px;top:347px">Color</div>
<div class="a" style="left:130px;top:344px;width:16px;height:16px;background:#fff;border:1.5px solid #000"></div>
<div class="pk" style="left:152px;top:347px">ByLayer</div>
<div class="a" style="left:15px;top:363px;width:275px;height:21px;background:#2b2e33;border-bottom:1px solid #45484d"></div>
<div class="a" style="left:123px;top:363px;width:1px;height:21px;background:#45484d"></div>
<div class="pk" style="left:20px;top:368px">Layer</div>
<div class="pk" style="left:128px;top:368px;color:#f2f2f2">0</div>
<div class="a" style="left:15px;top:384px;width:275px;height:21px;background:#2b2e33;border-bottom:1px solid #45484d"></div>
<div class="a" style="left:123px;top:384px;width:1px;height:21px;background:#45484d"></div>
<div class="pk" style="left:20px;top:389px">Linetype</div>
<div class="a" style="left:131px;top:393px;width:83px;height:2px;background:#f0f0f0"></div>
<div class="pk" style="left:219px;top:389px">ByLayer</div>
<div class="a" style="left:15px;top:405px;width:275px;height:21px;background:#2b2e33;border-bottom:1px solid #45484d"></div>
<div class="a" style="left:123px;top:405px;width:1px;height:21px;background:#45484d"></div>
<div class="pk" style="left:20px;top:410px">Linetype scale</div>
<div class="pk" style="left:128px;top:410px;color:#f2f2f2">1</div>
<div class="a" style="left:15px;top:426px;width:275px;height:21px;background:#2b2e33;border-bottom:1px solid #45484d"></div>
<div class="a" style="left:123px;top:426px;width:1px;height:21px;background:#45484d"></div>
<div class="pk" style="left:20px;top:431px">Lineweight</div>
<div class="a" style="left:131px;top:435px;width:83px;height:2px;background:#f0f0f0"></div>
<div class="pk" style="left:219px;top:431px">ByLayer</div>
<div class="a" style="left:15px;top:447px;width:275px;height:21px;background:#2b2e33;border-bottom:1px solid #45484d"></div>
<div class="a" style="left:123px;top:447px;width:1px;height:21px;background:#45484d"></div>
<div class="pk" style="left:20px;top:452px">Transparency</div>
<div class="pk" style="left:128px;top:452px;color:#f2f2f2">ByLayer</div>
<div class="a" style="left:15px;top:468px;width:275px;height:21px;background:#2b2e33;border-bottom:1px solid #45484d"></div>
<div class="a" style="left:123px;top:468px;width:1px;height:21px;background:#45484d"></div>
<div class="pk" style="left:20px;top:473px">Elevation</div>
<div class="pk" style="left:128px;top:473px;color:#f2f2f2">0 mm</div>
<div class="a" style="left:15px;top:489px;width:275px;height:21px;background:#45484d"></div>
<div class="a" style="left:1px;top:494px;width:12px;height:12px;background:#d9d9d9;border:1px solid #9a9a9a"></div>
<div class="a" style="left:3px;top:499px;width:8px;height:2px;background:#5a6470"></div>
<div class="pk" style="left:19px;top:493px;font-size:13px;font-weight:bold;color:#fff">View</div>
<div class="a" style="left:15px;top:510px;width:275px;height:21px;background:#2b2e33;border-bottom:1px solid #45484d"></div>
<div class="a" style="left:123px;top:510px;width:1px;height:21px;background:#45484d"></div>
<div class="a" style="left:1px;top:515px;width:12px;height:12px;background:#d9d9d9;border:1px solid #9a9a9a"></div>
<div class="a" style="left:3px;top:520px;width:8px;height:1px;background:#4a5460"></div>
<div class="a" style="left:6px;top:517px;width:1px;height:8px;background:#4a5460"></div>
<div class="pk" style="left:20px;top:515px">Camera</div>
<div class="pk" style="left:128px;top:515px;color:#f2f2f2">0, 0, 45.729</div>
<div class="a" style="left:15px;top:531px;width:275px;height:21px;background:#2b2e33;border-bottom:1px solid #45484d"></div>
<div class="a" style="left:123px;top:531px;width:1px;height:21px;background:#45484d"></div>
<div class="a" style="left:1px;top:536px;width:12px;height:12px;background:#d9d9d9;border:1px solid #9a9a9a"></div>
<div class="a" style="left:3px;top:541px;width:8px;height:1px;background:#4a5460"></div>
<div class="a" style="left:6px;top:538px;width:1px;height:8px;background:#4a5460"></div>
<div class="pk" style="left:20px;top:536px">Target</div>
<div class="pk" style="left:128px;top:536px;color:#f2f2f2">0, 0, 44.729</div>
<div class="a" style="left:15px;top:552px;width:275px;height:21px;background:#2b2e33;border-bottom:1px solid #45484d"></div>
<div class="a" style="left:123px;top:552px;width:1px;height:21px;background:#45484d"></div>
<div class="pk" style="left:20px;top:557px">Perspective</div>
<div class="pk" style="left:128px;top:557px;color:#f2f2f2">Off</div>
<div class="a" style="left:15px;top:573px;width:275px;height:21px;background:#2b2e33;border-bottom:1px solid #45484d"></div>
<div class="a" style="left:123px;top:573px;width:1px;height:21px;background:#45484d"></div>
<div class="pk" style="left:20px;top:578px">Lens length</div>
<div class="pk" style="left:128px;top:578px;color:#f2f2f2">50 mm</div>
<div class="a" style="left:15px;top:594px;width:275px;height:21px;background:#2b2e33;border-bottom:1px solid #45484d"></div>
<div class="a" style="left:123px;top:594px;width:1px;height:21px;background:#45484d"></div>
<div class="pk" style="left:20px;top:599px">Field of view</div>
<div class="pk" style="left:128px;top:599px;color:#f2f2f2">38.5801</div>
<div class="a" style="left:15px;top:615px;width:275px;height:21px;background:#2b2e33;border-bottom:1px solid #45484d"></div>
<div class="a" style="left:123px;top:615px;width:1px;height:21px;background:#45484d"></div>
<div class="pk" style="left:20px;top:620px">Height</div>
<div class="pk" style="left:128px;top:620px;color:#8e9196">1163.7743 mm</div>
<div class="a" style="left:15px;top:636px;width:275px;height:21px;background:#2b2e33;border-bottom:1px solid #45484d"></div>
<div class="a" style="left:123px;top:636px;width:1px;height:21px;background:#45484d"></div>
<div class="pk" style="left:20px;top:641px">Width</div>
<div class="pk" style="left:128px;top:641px;color:#8e9196">2994.1409 mm</div>
<div class="a" style="left:15px;top:657px;width:275px;height:21px;background:#2b2e33;border-bottom:1px solid #45484d"></div>
<div class="a" style="left:123px;top:657px;width:1px;height:21px;background:#45484d"></div>
<div class="pk" style="left:20px;top:662px">Clipping</div>
<div class="pk" style="left:128px;top:662px;color:#f2f2f2">Off</div>
<div class="a" style="left:15px;top:678px;width:275px;height:21px;background:#2b2e33;border-bottom:1px solid #45484d"></div>
<div class="a" style="left:123px;top:678px;width:1px;height:21px;background:#45484d"></div>
<div class="pk" style="left:20px;top:683px">Front plane</div>
<div class="pk" style="left:128px;top:683px;color:#f2f2f2">1 mm</div>
<div class="a" style="left:15px;top:699px;width:275px;height:21px;background:#2b2e33;border-bottom:1px solid #45484d"></div>
<div class="a" style="left:123px;top:699px;width:1px;height:21px;background:#45484d"></div>
<div class="pk" style="left:20px;top:704px">Back plane</div>
<div class="pk" style="left:128px;top:704px;color:#f2f2f2">0 mm</div>
<div class="a" style="left:15px;top:720px;width:275px;height:21px;background:#2b2e33;border-bottom:1px solid #45484d"></div>
<div class="a" style="left:123px;top:720px;width:1px;height:21px;background:#45484d"></div>
<div class="pk" style="left:20px;top:725px">Visual style</div>
<div class="pk" style="left:128px;top:725px;color:#f2f2f2">2dWireframe</div>
<div class="a" style="left:15px;top:741px;width:275px;height:21px;background:#45484d"></div>
<div class="a" style="left:1px;top:746px;width:12px;height:12px;background:#d9d9d9;border:1px solid #9a9a9a"></div>
<div class="a" style="left:3px;top:751px;width:8px;height:2px;background:#5a6470"></div>
<div class="pk" style="left:19px;top:745px;font-size:13px;font-weight:bold;color:#fff">Misc</div>
<div class="a" style="left:15px;top:762px;width:275px;height:21px;background:#2b2e33;border-bottom:1px solid #45484d"></div>
<div class="a" style="left:123px;top:762px;width:1px;height:21px;background:#45484d"></div>
<div class="pk" style="left:20px;top:767px">Annotation scale</div>
<div class="pk" style="left:128px;top:767px;color:#f2f2f2">1:1</div>
<div class="a" style="left:15px;top:783px;width:275px;height:21px;background:#2b2e33;border-bottom:1px solid #45484d"></div>
<div class="a" style="left:123px;top:783px;width:1px;height:21px;background:#45484d"></div>
<div class="pk" style="left:20px;top:788px">Default lighting</div>
<div class="pk" style="left:128px;top:788px;color:#f2f2f2">Off</div>
<!-- DRAWING AREA -->
<div class="a" style="left:291px;top:251px;width:1627px;height:747px;background:#2d3035"></div>
<div class="a" style="left:290px;top:251px;width:3px;height:487px;background:#2a2c30"></div>
<div class="a" style="left:295px;top:256px;width:81px;height:19px;background:#1b1c20"></div>
<div class="a" style="left:378px;top:256px;width:120px;height:19px;background:#303338"></div>
<div class="a" style="left:499px;top:256px;width:30px;height:19px;background:#1b1c20"></div>
<div class="pk" style="left:309px;top:259px;font-size:13px;color:#f0f0f0">Start</div>
<svg style="left:357px;top:260px" width="11" height="11"><path d="M0.5 0.5L10.5 10.5M10.5 0.5L0.5 10.5" stroke="#c8cacd" stroke-width="1.3"/></svg>
<div class="pk" style="left:390px;top:259px;font-size:14px;font-weight:bold;color:#fff">Drawing2*</div>
<svg style="left:477px;top:260px" width="11" height="11"><path d="M0.5 0.5L10.5 10.5M10.5 0.5L0.5 10.5" stroke="#d8dadd" stroke-width="1.3"/></svg>
<svg style="left:509px;top:259px" width="12" height="12"><path d="M6 0.5L6 11.5M0.5 6L11.5 6" stroke="#f0f0f0" stroke-width="1.2"/></svg>
<div class="a" style="left:293px;top:276px;width:1625px;height:462px;background:#1b1c20;border-top:1px solid #75787c;border-left:1px solid #8a8c90"></div>
<svg style="left:1828px;top:286px" width="84" height="84">
<circle cx="41.5" cy="40.5" r="38.5" fill="#8b8c8f"/>
<path d="M41.5 11.8L39.2 7.2L43.8 7.2Z" fill="#58595c"/>
<path d="M61.8 20.2L63.4 15.3L66.7 18.6Z" fill="#58595c"/>
<path d="M70.2 40.5L74.8 38.2L74.8 42.8Z" fill="#58595c"/>
<path d="M61.8 60.8L66.7 62.4L63.4 65.7Z" fill="#58595c"/>
<path d="M41.5 69.2L43.8 73.8L39.2 73.8Z" fill="#58595c"/>
<path d="M21.2 60.8L19.6 65.7L16.3 62.4Z" fill="#58595c"/>
<path d="M12.8 40.5L8.2 42.8L8.2 38.2Z" fill="#58595c"/>
<path d="M21.2 20.2L16.3 18.6L19.6 15.3Z" fill="#58595c"/>
</svg>
<svg style="left:0;top:0" width="1918" height="1025">
<path d="M820.7 484.3 C820.1 485.3 817.5 487.8 817.2 490.1 C816.9 492.4 817.3 496.4 819.0 498.3 C820.7 500.2 824.7 501.6 827.2 501.8 C829.7 502.0 832.2 501.2 834.2 499.5 C836.2 497.8 838.5 494.4 839.5 491.3 C840.5 488.2 840.7 484.1 840.0 480.8 C839.3 477.5 837.7 474.0 835.4 471.4 C833.1 468.8 829.1 466.2 826.0 465.0 C822.9 463.8 819.7 463.7 816.6 464.4 C813.5 465.1 810.3 466.7 807.2 469.0 C804.1 471.3 800.1 474.5 797.9 478.4 C795.7 482.3 794.4 487.6 793.8 492.5 C793.2 497.4 793.3 502.6 794.4 507.7 C795.5 512.8 797.5 518.6 800.2 522.9 C802.9 527.2 805.9 530.9 810.8 533.5 C815.7 536.1 823.3 538.3 829.5 538.7 C835.7 539.1 842.4 538.4 848.2 535.8 C854.1 533.2 861.9 525.0 864.6 522.9" fill="none" stroke="#d4d4d4" stroke-width="1.3"/>
<circle cx="897" cy="535.5" r="33.8" fill="none" stroke="#d4d4d4" stroke-width="1.3"/>
<path d="M1060.5 548.5 C1062.3 550.0 1066.4 555.0 1071.5 557.2 C1076.6 559.4 1085.1 561.6 1091.3 561.6 C1097.5 561.6 1103.3 560.5 1108.8 557.2 C1114.3 553.9 1120.7 547.8 1124.2 541.9 C1127.7 536.0 1129.3 528.0 1129.7 522.1 C1130.1 516.2 1128.8 512.2 1126.4 506.7 C1124.0 501.2 1120.2 493.8 1115.4 489.2 C1110.7 484.6 1104.9 481.5 1097.9 479.3 C1091.0 477.1 1081.8 475.4 1073.7 476.0 C1065.6 476.6 1056.5 479.3 1049.5 482.6 C1042.5 485.9 1036.6 490.6 1032.0 495.7 C1027.4 500.8 1024.0 507.4 1022.0 513.3 C1020.0 519.2 1019.7 525.0 1019.9 530.9 C1020.1 536.8 1021.4 541.2 1023.2 548.5 C1025.0 555.8 1028.7 566.4 1030.9 574.8 C1033.1 583.2 1034.9 590.2 1036.4 599.0 C1037.9 607.8 1038.2 620.2 1039.7 627.5 C1041.2 634.8 1042.0 637.4 1045.1 642.9 C1048.2 648.4 1053.2 655.4 1058.3 660.5 C1063.4 665.6 1069.0 670.2 1075.9 673.7 C1082.9 677.2 1091.6 680.9 1100.0 681.3 C1108.4 681.7 1118.7 679.4 1126.4 675.9 C1134.1 672.4 1140.7 666.4 1146.2 660.5 C1151.7 654.6 1156.3 646.4 1159.4 640.7 C1162.5 635.0 1163.9 628.8 1164.8 626.4" fill="none" stroke="#d4d4d4" stroke-width="1.3"/>
<path d="M353.5 638V679.5H395" fill="none" stroke="#b8b8b8" stroke-width="1"/>
<path d="M353.5 662.5H370.5" stroke="#c04848" stroke-width="1"/><path d="M353.5 679.5H370.5" stroke="#c04848" stroke-width="1"/>
<path d="M353.5 662.5V679.5M370.5 662.5V679.5" stroke="#28a05a" stroke-width="1"/>
<text x="357.5" y="676" font-family="Liberation Sans" font-size="10" fill="#e8e8e8">W</text>
<path d="M349.5 625L353.5 630L357.5 625M353.5 630V634" fill="none" stroke="#28a05a" stroke-width="1"/>
<path d="M400 675.5L407.5 683.5M407.5 675.5L400 683.5" stroke="#c85050" stroke-width="1.1"/>
<path d="M433 692.5H496.8" stroke="#c07070" stroke-width="1"/>
<path d="M464.5 659.8V724" stroke="#2aa862" stroke-width="1"/>
<rect x="459.5" y="687.5" width="10" height="10" fill="none" stroke="#d8d8d8" stroke-width="1"/>
</svg>
<div class="a" style="left:293px;top:738px;width:1625px;height:21px;background:#2d3035"></div>
<div class="a" style="left:293px;top:738px;width:256px;height:20px;background:#1b1c20"></div>
<div class="a" style="left:397px;top:738px;width:47px;height:20px;background:#30333a"></div>
<div class="a" style="left:293px;top:759px;width:1625px;height:1px;background:#5a5d62"></div>
<svg style="left:0;top:0" width="1918" height="1025">
<path d="M295.5 757V738.5H315" fill="none" stroke="#8a8c90" stroke-width="1"/>
<path d="M315.5 757V738.5H335" fill="none" stroke="#8a8c90" stroke-width="1"/>
<path d="M336.5 757V738.5H356" fill="none" stroke="#8a8c90" stroke-width="1"/>
<path d="M357.5 757V738.5H377" fill="none" stroke="#8a8c90" stroke-width="1"/>
<path d="M378.5 757V738.5H398" fill="none" stroke="#8a8c90" stroke-width="1"/>
<path d="M474.5 740V757" stroke="#3a3d42" stroke-width="1"/>
<path d="M503.5 740V757" stroke="#3a3d42" stroke-width="1"/>
<path d="M532.5 740V757" stroke="#3a3d42" stroke-width="1"/>
<path d="M301.5 743V754" stroke="#f0f0f0" stroke-width="1.2"/><path d="M310 743L303 748.5L310 754Z" fill="#f0f0f0"/>
<path d="M329 743L322 748.5L329 754Z" fill="#f0f0f0"/>
<path d="M343 743L350 748.5L343 754Z" fill="#f0f0f0"/>
<path d="M364 743L371 748.5L364 754Z" fill="#f0f0f0"/><path d="M372.5 743V754" stroke="#f0f0f0" stroke-width="1.2"/>
<rect x="382.5" y="742.5" width="10" height="11" fill="none" stroke="#f0f0f0" stroke-width="1.2"/><path d="M384.5 746H390.5M384.5 749.5H390.5" stroke="#f0f0f0" stroke-width="1.2"/>
<path d="M540.5 745V752M537 748.5H544" stroke="#f0f0f0" stroke-width="1.8"/>
</svg>
<div class="pk" style="left:402px;top:742px;font-size:12.5px;font-weight:bold;color:#fff">Model</div>
<div class="pk" style="left:448px;top:742px;font-size:12.5px;color:#e4e4e4">A-4</div>
<div class="pk" style="left:478px;top:742px;font-size:12.5px;color:#e4e4e4">A-3</div>
<div class="pk" style="left:507px;top:742px;font-size:12.5px;color:#e4e4e4">A-0</div>
<!-- STATUS BAR -->
<div class="a" style="left:0;top:998px;width:1918px;height:21px;background:#1b1c20"></div>
<div class="a" style="left:0;top:1019.6px;width:1918px;height:6px;background:#e2e8f2"></div>
<div class="a" style="left:1388.8px;top:1001px;width:38.2px;height:17px;background:#45484d"></div>
<div class="a" style="left:1624.4px;top:1001px;width:23.9px;height:17px;background:#45484d"></div>
<div class="a" style="left:1656px;top:1001px;width:33.4px;height:17px;background:#45484d"></div>
<div class="a" style="left:1697px;top:1001px;width:15.9px;height:17px;background:#45484d"></div>
<div class="a" style="left:1721.2px;top:1001px;width:15.8px;height:17px;background:#45484d"></div>
<div class="a" style="left:789.5px;top:1000px;width:1.2px;height:19px;background:#d4d4d4"></div>
<div class="a" style="left:985.5px;top:1000px;width:1.2px;height:19px;background:#d4d4d4"></div>
<div class="a" style="left:1046.5px;top:1000px;width:1.2px;height:19px;background:#d4d4d4"></div>
<div class="a" style="left:1093.5px;top:1000px;width:1.2px;height:19px;background:#d4d4d4"></div>
<div class="a" style="left:1118.5px;top:1000px;width:1.2px;height:19px;background:#d4d4d4"></div>
<div class="a" style="left:1161.5px;top:1000px;width:1.2px;height:19px;background:#d4d4d4"></div>
<div class="a" style="left:1200.5px;top:1000px;width:1.2px;height:19px;background:#d4d4d4"></div>
<div class="a" style="left:1288.5px;top:1000px;width:1.2px;height:19px;background:#d4d4d4"></div>
<div class="a" style="left:1337.5px;top:1000px;width:1.2px;height:19px;background:#d4d4d4"></div>
<div class="a" style="left:1385.5px;top:1000px;width:1.2px;height:19px;background:#d4d4d4"></div>
<div class="a" style="left:1430.5px;top:1000px;width:1.2px;height:19px;background:#d4d4d4"></div>
<div class="a" style="left:1486.5px;top:1000px;width:1.2px;height:19px;background:#d4d4d4"></div>
<div class="a" style="left:1519.5px;top:1000px;width:1.2px;height:19px;background:#d4d4d4"></div>
<div class="a" style="left:1553.5px;top:1000px;width:1.2px;height:19px;background:#d4d4d4"></div>
<div class="a" style="left:1581.5px;top:1000px;width:1.2px;height:19px;background:#d4d4d4"></div>
<div class="a" style="left:1621.5px;top:1000px;width:1.2px;height:19px;background:#d4d4d4"></div>
<div class="a" style="left:1651.5px;top:1000px;width:1.2px;height:19px;background:#d4d4d4"></div>
<div class="a" style="left:1693.5px;top:1000px;width:1.2px;height:19px;background:#d4d4d4"></div>
<div class="a" style="left:1717.5px;top:1000px;width:1.2px;height:19px;background:#d4d4d4"></div>
<div class="a" style="left:1741.5px;top:1000px;width:1.2px;height:19px;background:#d4d4d4"></div>
<div class="a" style="left:1771.5px;top:1000px;width:1.2px;height:19px;background:#d4d4d4"></div>
<div class="a" style="left:1823.5px;top:1000px;width:1.2px;height:19px;background:#d4d4d4"></div>
<div class="a" style="left:1860.5px;top:1000px;width:1.2px;height:19px;background:#d4d4d4"></div>
<div class="t" style="left:3.8px;top:1003.2px;font-size:13.3px;color:#f2f2f2;transform:scaleX(0.890);transform-origin:0 0">Ready</div>
<div class="t" style="left:848.8px;top:1003.2px;font-size:13.3px;color:#f2f2f2;transform:scaleX(0.976);transform-origin:0 0">-979.768, -299.5551, 0</div>
<div class="t" style="left:990.6px;top:1003.2px;font-size:13.3px;color:#f2f2f2;transform:scaleX(0.952);transform-origin:0 0">Standard</div>
<div class="t" style="left:1050.7px;top:1003.2px;font-size:13.3px;color:#f2f2f2;transform:scaleX(0.925);transform-origin:0 0">ISO-25</div>
<div class="t" style="left:1098.2px;top:1003.2px;font-size:13.3px;color:#f2f2f2;transform:scaleX(0.986);transform-origin:0 0">Ari</div>
<div class="t" style="left:1126.4px;top:1003.2px;font-size:13.3px;color:#85888d;transform:scaleX(0.839);transform-origin:0 0">SNAP</div>
<div class="t" style="left:1169.3px;top:1003.2px;font-size:13.3px;color:#85888d;transform:scaleX(0.824);transform-origin:0 0">GRID</div>
<div class="t" style="left:1205.4px;top:1003.2px;font-size:13.3px;color:#85888d;transform:scaleX(0.839);transform-origin:0 0">HIDEOBJECTS</div>
<div class="t" style="left:1292.2px;top:1003.2px;font-size:13.3px;color:#85888d;transform:scaleX(0.866);transform-origin:0 0">ORTHO</div>
<div class="t" style="left:1342.3px;top:1003.2px;font-size:13.3px;color:#85888d;transform:scaleX(0.832);transform-origin:0 0">POLAR</div>
<div class="t" style="left:1390.5px;top:1003.2px;font-size:13.3px;color:#f4f4f4;transform:scaleX(0.787);transform-origin:0 0">ESNAP</div>
<div class="t" style="left:1435.5px;top:1003.2px;font-size:13.3px;color:#85888d;transform:scaleX(0.862);transform-origin:0 0">STRACK</div>
<div class="t" style="left:1490.6px;top:1003.2px;font-size:13.3px;color:#85888d;transform:scaleX(0.894);transform-origin:0 0">LWT</div>
<div class="t" style="left:1525.0px;top:1003.2px;font-size:13.3px;color:#f2f2f2;transform:scaleX(0.866);transform-origin:0 0">TILE</div>
<div class="t" style="left:1558.7px;top:1003.2px;font-size:13.3px;color:#f2f2f2;transform:scaleX(0.930);transform-origin:0 0">1:1</div>
<div class="t" style="left:1585.3px;top:1003.2px;font-size:13.3px;color:#85888d;transform:scaleX(0.830);transform-origin:0 0">DUCS</div>
<div class="t" style="left:1625.5px;top:1003.2px;font-size:13.3px;color:#f4f4f4;transform:scaleX(0.784);transform-origin:0 0">DYN</div>
<div class="t" style="left:1657.0px;top:1003.2px;font-size:13.3px;color:#f4f4f4;transform:scaleX(0.833);transform-origin:0 0">QUAD</div>
<div class="t" style="left:1698.0px;top:1003.2px;font-size:13.3px;color:#f4f4f4;transform:scaleX(0.800);transform-origin:0 0">RT</div>
<div class="t" style="left:1722.0px;top:1003.2px;font-size:13.3px;color:#f4f4f4;transform:scaleX(0.784);transform-origin:0 0">SC</div>
<div class="t" style="left:1745.3px;top:1003.2px;font-size:13.3px;color:#85888d;transform:scaleX(0.825);transform-origin:0 0">HKA</div>
<div class="t" style="left:1776.8px;top:1003.2px;font-size:13.3px;color:#85888d;transform:scaleX(0.852);transform-origin:0 0">LOCKUI</div>
<div class="t" style="left:1827.3px;top:1003.2px;font-size:13.3px;color:#f2f2f2;transform:scaleX(0.900);transform-origin:0 0">None</div>
<svg style="left:0;top:0" width="1918" height="1025"><path d="M1865 1009H1873L1869 1013Z" fill="#f0f0f0"/>
<rect x="1915" y="1010" width="2.2" height="2.2" fill="#d0d0d0"/>
<rect x="1911" y="1014" width="2.2" height="2.2" fill="#d0d0d0"/>
<rect x="1915" y="1014" width="2.2" height="2.2" fill="#d0d0d0"/>
<rect x="1907" y="1017" width="2.2" height="2.2" fill="#d0d0d0"/>
<rect x="1911" y="1017" width="2.2" height="2.2" fill="#d0d0d0"/>
<rect x="1915" y="1017" width="2.2" height="2.2" fill="#d0d0d0"/>
</svg>
<!-- COMMAND LINE -->
<div class="a" style="left:305px;top:763px;width:1595px;height:209px;background:#808080"></div>
<div class="a" style="left:1900px;top:763px;width:18px;height:209px;background:#f0f0f0"></div>
<div class="a" style="left:1910px;top:929px;width:2.5px;height:21px;border-radius:1.5px;background:#858585"></div>
<div class="a" style="left:305px;top:972px;width:1613px;height:26px;background:#2f3237"></div>
<svg style="left:295px;top:768px" width="9" height="9"><path d="M1 1L8 8M8 1L1 8" stroke="#c2c4c8" stroke-width="2"/></svg>
<div class="a" style="left:297.5px;top:866.5px;width:2px;height:2px;background:#e8e8e8"></div>
<div class="a" style="left:297.5px;top:870.1px;width:2px;height:2px;background:#e8e8e8"></div>
<div class="a" style="left:297.5px;top:873.7px;width:2px;height:2px;background:#e8e8e8"></div>
<div class="a" style="left:297.5px;top:877.3px;width:2px;height:2px;background:#e8e8e8"></div>
<div class="a" style="left:297.5px;top:880.9px;width:2px;height:2px;background:#e8e8e8"></div>
<div class="cl" style="top:779.3px;font-size:15.0px">Direction of chord (hold CTRL to switch direction) &lt;38.2942&gt;: close
Unable to recognize entry. Please try again.
Direction of chord (hold CTRL to switch direction) &lt;38.2942&gt;:
Direction of chord (hold CTRL to switch direction) &lt;38.2942&gt;:
Set end of arc or [draw Lines/Angle/CEnter/CLose/Direction/Halfwidth/Radius/Second point/Width/Undo]:
Set end of arc or [draw Lines/Angle/CEnter/CLose/Direction/Halfwidth/Radius/Second point/Width/Undo]:
Set end of arc or [draw Lines/Angle/CEnter/CLose/Direction/Halfwidth/Radius/Second point/Width/Undo]:
Set end of arc or [draw Lines/Angle/CEnter/CLose/Direction/Halfwidth/Radius/Second point/Width/Undo]:
Set end of arc or [draw Lines/Angle/CEnter/CLose/Direction/Halfwidth/Radius/Second point/Width/Undo]:</div>
<div class="a" style="left:309.5px;top:981.5px;width:2px;height:2px;background:#e8e8e8"></div><div class="a" style="left:309.5px;top:987px;width:2px;height:2px;background:#e8e8e8"></div>
<div class="t" style="left:324px;top:976px;font-family:'Liberation Mono',monospace;font-style:italic;font-size:14.67px;color:#9fa2a6">Enter command</div>
<svg style="left:0;top:0" width="1918" height="1025"><path d="M282.2 830.0 C282.2 808.4 281.9 794.0 282.2 784.6 C282.4 775.2 282.5 777.1 283.7 773.9 C284.9 770.6 286.9 768.2 289.5 765.1 C292.1 762.0 296.1 757.8 299.3 755.4 C302.6 753.0 304.1 752.5 309.0 751.0 C313.9 749.5 323.6 747.7 328.5 746.6 C333.4 745.5 334.2 745.7 338.3 744.6 C342.4 743.5 348.8 740.9 352.9 739.8 C357.0 738.7 351.5 738.1 362.7 737.8 C373.9 737.5 391.6 737.7 420.0 737.8 C448.4 737.9 492.2 738.0 533.0 738.5 C573.8 739.0 625.5 739.4 665.0 740.5 C704.5 741.6 733.4 743.6 770.0 745.0 C806.6 746.4 853.0 747.5 884.7 749.0 C916.4 750.5 939.1 752.1 960.0 754.0 C980.9 755.9 996.7 758.2 1010.0 760.5 C1023.3 762.8 1028.3 765.6 1040.0 768.0 C1051.7 770.4 1066.7 773.1 1080.0 775.0 C1093.3 776.9 1102.3 778.7 1120.0 779.5 C1137.7 780.3 1169.8 778.8 1186.0 780.0 C1202.2 781.2 1207.5 782.5 1217.0 787.0 C1226.5 791.5 1233.8 797.3 1243.0 807.0 C1252.2 816.7 1264.8 834.8 1272.0 845.0 C1279.2 855.2 1282.9 860.4 1286.0 868.0 C1289.1 875.6 1289.8 880.1 1290.5 890.6 C1291.2 901.1 1291.8 919.7 1290.5 930.7 C1289.2 941.7 1287.6 949.6 1283.0 956.5 C1278.4 963.4 1272.0 968.2 1263.0 972.0 C1254.0 975.8 1244.2 977.8 1229.0 979.5 C1213.8 981.2 1195.5 981.5 1171.5 982.4 C1147.5 983.3 1128.1 983.6 1085.0 985.0 C1041.9 986.4 956.0 990.9 913.0 991.0 C870.0 991.1 850.8 986.6 827.0 985.5 C803.2 984.4 818.9 984.9 770.0 984.5 C721.1 984.1 594.8 983.7 533.4 982.9 C472.0 982.1 426.5 979.9 401.7 979.5 C376.9 979.1 394.1 980.7 384.3 980.4 C374.5 980.1 353.9 979.2 342.6 977.7 C331.3 976.2 322.4 973.4 316.5 971.5 C310.6 969.6 309.5 968.2 307.1 966.3 C304.8 964.4 305.3 964.3 302.4 960.0 C299.5 955.7 293.2 948.3 289.8 940.7 C286.4 933.1 283.2 932.9 281.9 914.4 C280.6 895.9 282.1 851.6 282.2 830.0Z" fill="none" stroke="#e21d1d" stroke-width="5" stroke-linejoin="round"/></svg>

</body></html>
